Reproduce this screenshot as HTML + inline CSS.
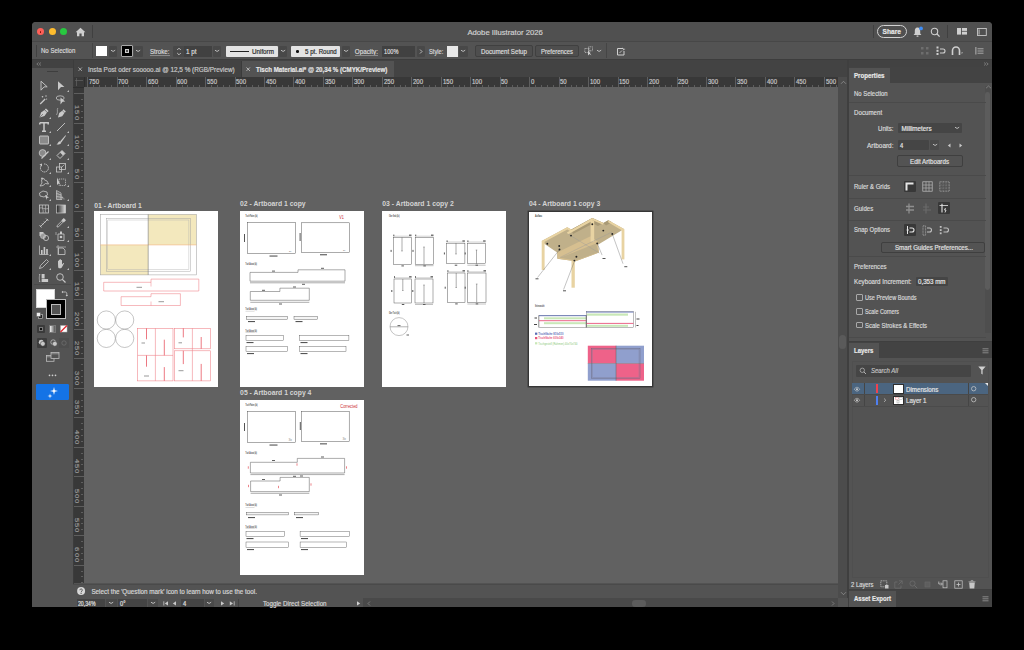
<!DOCTYPE html>
<html><head><meta charset="utf-8">
<style>
*{box-sizing:border-box;margin:0;padding:0}
html,body{width:1024px;height:650px;overflow:hidden;background:#000}
body{position:relative;font-family:"Liberation Sans",sans-serif;color:#d6d6d6;font-size:6.2px;line-height:1}
.a{position:absolute}
.t{position:absolute;white-space:nowrap;line-height:1;-webkit-text-stroke:0.18px currentColor}
.b{font-weight:bold}
svg{overflow:visible}
</style></head><body>

<div class="a" style="left:32.0px;top:21.6px;width:960.0px;height:585.4px;background:#535353;border-radius:4px 4px 0 0"></div>
<div class="a" style="left:32.0px;top:21.6px;width:960.0px;height:19.4px;background:#505050;border-radius:4px 4px 0 0"></div>
<div class="a" style="left:32.0px;top:41.0px;width:960.0px;height:19.4px;background:#535353;border-top:0.6px solid #474747;border-bottom:0.8px solid #3d3d3d"></div>
<div class="a" style="left:32.0px;top:60.0px;width:41.0px;height:8.0px;background:#424242"></div>
<div class="a" style="left:32.0px;top:68.0px;width:41.0px;height:539.0px;background:#535353"></div>
<div class="a" style="left:73.0px;top:60.0px;width:775.0px;height:16.5px;background:#434343"></div>
<div class="a" style="left:73.0px;top:76.5px;width:765.0px;height:10.2px;background:#383838"></div>
<div class="a" style="left:73.0px;top:76.5px;width:10.5px;height:506.5px;background:#383838"></div>
<div class="a" style="left:83.5px;top:86.7px;width:754.5px;height:496.8px;background:#616161"></div>
<div class="a" style="left:838.0px;top:76.5px;width:9.0px;height:521.0px;background:#4c4c4c"></div>
<div class="a" style="left:37.0px;top:28.3px;width:7.0px;height:7.0px;border-radius:50%;background:#fe5f57"></div>
<div class="a" style="left:39.6px;top:30.9px;width:1.8px;height:1.8px;border-radius:50%;background:#7e0c08"></div>
<div class="a" style="left:48.5px;top:28.3px;width:7.0px;height:7.0px;border-radius:50%;background:#febc2e"></div>
<div class="a" style="left:59.8px;top:28.3px;width:7.0px;height:7.0px;border-radius:50%;background:#28c840"></div>
<svg class="a" style="left:75.0px;top:27.0px" width="11" height="10" viewBox="0 0 11 10"><path d="M5.5 0.8 L10.4 5.2 L9 5.2 L9 9.2 L6.6 9.2 L6.6 6.6 L4.4 6.6 L4.4 9.2 L2 9.2 L2 5.2 L0.6 5.2 Z" fill="#cfcfcf"/></svg>
<div class="a" style="left:92.0px;top:25.0px;width:1.0px;height:13.0px;background:#404040"></div>
<div class="t" style="left:467.4px;top:28.55px;font-size:7.73px;color:#d0d0d0;">Adobe Illustrator 2026</div>
<div class="a" style="left:873.0px;top:25.0px;width:1.0px;height:13.0px;background:#404040"></div>
<div class="a" style="left:877.0px;top:24.8px;width:30.0px;height:13.4px;border:1px solid #d2d2d2;border-radius:7px"></div>
<div class="t" style="left:882.6px;top:29.36px;font-size:6.62px;color:#e8e8e8;font-weight:bold;">Share</div>
<svg class="a" style="left:912.0px;top:26.0px" width="12" height="12" viewBox="0 0 12 12"><path d="M5.5 1.5 C3.3 1.5 2.8 3.5 2.8 5 L2.8 7.5 L1.6 9 L9.4 9 L8.2 7.5 L8.2 5 C8.2 3.5 7.7 1.5 5.5 1.5 Z" fill="#cfcfcf"/><rect x="4.4" y="9.4" width="2.2" height="1.4" rx="0.7" fill="#cfcfcf"/><circle cx="9" cy="2.4" r="1.9" fill="#3e8ef7"/></svg>
<svg class="a" style="left:930.0px;top:26.5px" width="11" height="11" viewBox="0 0 11 11"><circle cx="4.5" cy="4.5" r="3.2" fill="none" stroke="#cfcfcf" stroke-width="1.1"/><path d="M6.8 6.8 L9.6 9.6" stroke="#cfcfcf" stroke-width="1.3"/></svg>
<div class="a" style="left:946.5px;top:25.0px;width:1.0px;height:13.0px;background:#404040"></div>
<svg class="a" style="left:956.8px;top:28.4px" width="10" height="7" viewBox="0 0 10 7"><rect x="0" y="0" width="4" height="6.6" fill="#cfcfcf"/><rect x="4.9" y="0" width="5.1" height="2.9" fill="#cfcfcf"/><rect x="4.9" y="3.7" width="5.1" height="2.9" fill="#cfcfcf"/></svg>
<svg class="a" style="left:977.0px;top:27.8px" width="10" height="8" viewBox="0 0 10 8"><rect x="0.5" y="0.5" width="8.8" height="7" fill="none" stroke="#c8c8c8" stroke-width="0.9"/><rect x="1.4" y="1.4" width="1.4" height="5.2" fill="#a0a0a0"/></svg>
<div class="a" style="left:35.5px;top:45.0px;width:1.0px;height:12.0px;background:#404040"></div>
<div class="t" style="left:40.7px;top:48.41px;font-size:6.30px;color:#d9d9d9;transform:scaleX(0.960);transform-origin:0 0;">No Selection</div>
<div class="a" style="left:92.0px;top:43.0px;width:1.0px;height:15.0px;background:#454545"></div>
<div class="a" style="left:96.2px;top:45.8px;width:11.3px;height:10.6px;background:#fff"></div>
<div class="a" style="left:108.6px;top:45.5px;width:8.2px;height:11.0px;background:#484848;border-radius:1px"></div>
<svg class="a" style="left:109.6px;top:49.0px" width="6.2" height="4" viewBox="0 0 6.2 4"><path d="M1 1.2 L3.10 2.46 L5.20 1.2" fill="none" stroke="#c8c8c8" stroke-width="0.9"/></svg>
<div class="a" style="left:121.1px;top:45.4px;width:11.7px;height:11.2px;background:#000;border:1.2px solid #a8a8a8;border-radius:1px"></div>
<div class="a" style="left:125.0px;top:49.0px;width:4.2px;height:4.2px;background:#d0d0d0"></div>
<div class="a" style="left:126.2px;top:50.2px;width:1.8px;height:1.8px;background:#555"></div>
<div class="a" style="left:133.6px;top:45.5px;width:9.4px;height:11.0px;background:#484848;border-radius:1px"></div>
<svg class="a" style="left:135.2px;top:49.0px" width="6.2" height="4" viewBox="0 0 6.2 4"><path d="M1 1.2 L3.10 2.46 L5.20 1.2" fill="none" stroke="#c8c8c8" stroke-width="0.9"/></svg>
<div class="t" style="left:150.0px;top:48.71px;font-size:6.30px;color:#d9d9d9;transform:scaleX(0.977);transform-origin:0 0;">Stroke:</div>
<div class="a" style="left:150.0px;top:55.4px;width:19.5px;height:0.7px;background:#8a8a8a"></div>
<div class="a" style="left:172.8px;top:45.5px;width:11.0px;height:11.0px;background:#484848;border-radius:1px 0 0 1px"></div>
<svg class="a" style="left:175.5px;top:46.5px" width="6" height="9" viewBox="0 0 6 9"><path d="M1.2 3 L3 1.2 L4.8 3 M1.2 6 L3 7.8 L4.8 6" fill="none" stroke="#c8c8c8" stroke-width="0.9"/></svg>
<div class="a" style="left:183.8px;top:45.5px;width:28.2px;height:11.0px;background:#414141"></div>
<div class="t" style="left:185.6px;top:48.71px;font-size:6.30px;color:#dedede;transform:scaleX(1.009);transform-origin:0 0;">1 pt</div>
<div class="a" style="left:213.4px;top:45.5px;width:7.6px;height:11.0px;background:#484848;border-radius:1px"></div>
<svg class="a" style="left:214.1px;top:49.0px" width="6.2" height="4" viewBox="0 0 6.2 4"><path d="M1 1.2 L3.10 2.46 L5.20 1.2" fill="none" stroke="#c8c8c8" stroke-width="0.9"/></svg>
<div class="a" style="left:226.0px;top:45.9px;width:51.6px;height:10.7px;background:#e3e3e3;border-radius:1px"></div>
<div class="a" style="left:229.5px;top:50.8px;width:19.0px;height:1.0px;background:#222"></div>
<div class="t" style="left:252.2px;top:48.71px;font-size:6.30px;color:#2a2a2a;transform:scaleX(0.993);transform-origin:0 0;">Uniform</div>
<div class="a" style="left:279.0px;top:45.5px;width:8.0px;height:11.0px;background:#484848;border-radius:1px"></div>
<svg class="a" style="left:279.9px;top:49.0px" width="6.2" height="4" viewBox="0 0 6.2 4"><path d="M1 1.2 L3.10 2.46 L5.20 1.2" fill="none" stroke="#c8c8c8" stroke-width="0.9"/></svg>
<div class="a" style="left:291.3px;top:45.9px;width:49.2px;height:10.7px;background:#e3e3e3;border-radius:1px"></div>
<div class="a" style="left:296.0px;top:50.0px;width:2.6px;height:2.6px;border-radius:50%;background:#111"></div>
<div class="t" style="left:305.4px;top:48.71px;font-size:6.30px;color:#2a2a2a;transform:scaleX(0.976);transform-origin:0 0;">5 pt. Round</div>
<div class="a" style="left:342.0px;top:45.5px;width:8.0px;height:11.0px;background:#484848;border-radius:1px"></div>
<svg class="a" style="left:342.9px;top:49.0px" width="6.2" height="4" viewBox="0 0 6.2 4"><path d="M1 1.2 L3.10 2.46 L5.20 1.2" fill="none" stroke="#c8c8c8" stroke-width="0.9"/></svg>
<div class="t" style="left:354.8px;top:48.71px;font-size:6.30px;color:#d9d9d9;">Opacity:</div>
<div class="a" style="left:354.8px;top:55.4px;width:23.0px;height:0.7px;background:#8a8a8a"></div>
<div class="a" style="left:381.7px;top:45.5px;width:33.6px;height:11.0px;background:#414141"></div>
<div class="t" style="left:383.7px;top:48.71px;font-size:6.30px;color:#dedede;transform:scaleX(0.894);transform-origin:0 0;">100%</div>
<div class="a" style="left:416.6px;top:45.5px;width:8.4px;height:11.0px;background:#484848;border-radius:1px"></div>
<svg class="a" style="left:419.0px;top:48.5px" width="4" height="5" viewBox="0 0 4 5"><path d="M1 0.5 L3 2.5 L1 4.5" fill="none" stroke="#c8c8c8" stroke-width="0.9"/></svg>
<div class="t" style="left:428.7px;top:48.71px;font-size:6.30px;color:#d9d9d9;transform:scaleX(0.908);transform-origin:0 0;">Style:</div>
<div class="a" style="left:446.9px;top:45.5px;width:11.1px;height:11.0px;background:#e8e8e8"></div>
<div class="a" style="left:459.0px;top:45.5px;width:9.0px;height:11.0px;background:#484848;border-radius:1px"></div>
<svg class="a" style="left:460.4px;top:49.0px" width="6.2" height="4" viewBox="0 0 6.2 4"><path d="M1 1.2 L3.10 2.46 L5.20 1.2" fill="none" stroke="#c8c8c8" stroke-width="0.9"/></svg>
<div class="a" style="left:475.0px;top:45.4px;width:57.8px;height:11.3px;border:1px solid #404040;border-radius:2px;background:#4e4e4e"></div>
<div class="t" style="left:481.0px;top:48.71px;font-size:6.30px;color:#dddddd;transform:scaleX(0.980);transform-origin:0 0;">Document Setup</div>
<div class="a" style="left:535.0px;top:45.4px;width:43.7px;height:11.3px;border:1px solid #404040;border-radius:2px;background:#4e4e4e"></div>
<div class="t" style="left:541.0px;top:48.71px;font-size:6.30px;color:#dddddd;transform:scaleX(0.942);transform-origin:0 0;">Preferences</div>
<svg class="a" style="left:584.0px;top:46.0px" width="10" height="10" viewBox="0 0 10 10"><rect x="0.8" y="2.5" width="5" height="4" fill="none" stroke="#bdbdbd" stroke-width="0.8" stroke-dasharray="1 0.6"/><rect x="4.5" y="0.8" width="4" height="4" fill="none" stroke="#bdbdbd" stroke-width="0.8" stroke-dasharray="1 0.6"/><path d="M4 4 L4 9.5 L5.5 8 L7.5 9.5 Z" fill="#cfcfcf"/></svg>
<svg class="a" style="left:595.9px;top:49.0px" width="6.2" height="4" viewBox="0 0 6.2 4"><path d="M1 1.2 L3.10 2.46 L5.20 1.2" fill="none" stroke="#c8c8c8" stroke-width="0.9"/></svg>
<div class="a" style="left:606.0px;top:43.0px;width:1.0px;height:15.0px;background:#454545"></div>
<svg class="a" style="left:615.5px;top:46.0px" width="10" height="10" viewBox="0 0 10 10"><path d="M7 2.5 L1.5 2.5 L1.5 9 L8 9 L8 5" fill="none" stroke="#cfcfcf" stroke-width="1"/><path d="M6 0.5 L7 2.5 L9.5 3 L7.5 4 L8 6" fill="#cfcfcf"/><path d="M3.5 7 L6 4.5" stroke="#cfcfcf" stroke-width="0.8"/></svg>
<svg class="a" style="left:921.0px;top:46.5px" width="8" height="8" viewBox="0 0 8 8"><g fill="#6e6e6e"><rect x="0" y="0" width="2.5" height="2.5"/><rect x="5" y="0" width="2.5" height="2.5"/><rect x="0" y="5" width="2.5" height="2.5"/><rect x="5" y="5" width="2.5" height="2.5"/></g></svg>
<svg class="a" style="left:935.5px;top:46.0px" width="10" height="10" viewBox="0 0 10 10"><g fill="#cfcfcf"><rect x="0.5" y="0.5" width="2" height="2"/><rect x="0.5" y="3.8" width="2" height="2"/><rect x="0.5" y="7" width="2" height="2"/></g><path d="M4 3 L7 3 A2 2 0 0 1 7 7 L4 7" fill="none" stroke="#cfcfcf" stroke-width="1.1"/></svg>
<svg class="a" style="left:951.0px;top:46.0px" width="13" height="10" viewBox="0 0 13 10"><path d="M1.5 9 L1.5 4.5 A3.5 3.5 0 0 1 8.5 4.5 L8.5 9" fill="none" stroke="#cfcfcf" stroke-width="1.6"/><path d="M9.8 6.3 L10.9 7.3 L12 6.3" fill="none" stroke="#bdbdbd" stroke-width="0.7"/></svg>
<svg class="a" style="left:974.5px;top:46.5px" width="9" height="8" viewBox="0 0 9 8"><g fill="#8f8f8f"><rect x="0" y="0" width="1.6" height="7.5"/><rect x="2.5" y="1" width="6" height="1.4"/><rect x="2.5" y="3.3" width="6" height="1.4"/><rect x="2.5" y="5.6" width="6" height="1.4"/></g></svg>
<div class="a" style="left:241.4px;top:60.5px;width:0.8px;height:16.0px;background:#3a3a3a"></div>
<div class="a" style="left:242.0px;top:60.5px;width:152.0px;height:16.0px;background:#535353"></div>
<svg class="a" style="left:78.3px;top:66.8px" width="4.4" height="4.4" viewBox="0 0 4.4 4.4"><path d="M0.5 0.5 L3.9 3.9 M3.9 0.5 L0.5 3.9" stroke="#bdbdbd" stroke-width="0.8"/></svg>
<div class="t" style="left:87.6px;top:66.51px;font-size:6.30px;color:#c9c9c9;transform:scaleX(1.014);transform-origin:0 0;">Insta Post oder sooooo.ai @ 12,5 % (RGB/Preview)</div>
<svg class="a" style="left:245.8px;top:66.8px" width="4.4" height="4.4" viewBox="0 0 4.4 4.4"><path d="M0.5 0.5 L3.9 3.9 M3.9 0.5 L0.5 3.9" stroke="#d0d0d0" stroke-width="0.8"/></svg>
<div class="t" style="left:255.7px;top:66.51px;font-size:6.30px;color:#e6e6e6;font-weight:bold;transform:scaleX(0.979);transform-origin:0 0;">Tisch Material.ai* @ 20,34 % (CMYK/Preview)</div>
<div class="a" style="left:87.1px;top:76.7px;width:0.7px;height:9.9px;background:#5e5e5e"></div>
<div class="t" style="left:88.9px;top:79.21px;font-size:6.30px;color:#c8c8c8;transform:scaleX(0.956);transform-origin:0 0;">750</div>
<div class="a" style="left:93.0px;top:84.6px;width:0.6px;height:2.0px;background:#5e5e5e"></div>
<div class="a" style="left:98.9px;top:84.6px;width:0.6px;height:2.0px;background:#5e5e5e"></div>
<div class="a" style="left:104.8px;top:84.6px;width:0.6px;height:2.0px;background:#5e5e5e"></div>
<div class="a" style="left:110.7px;top:84.6px;width:0.6px;height:2.0px;background:#5e5e5e"></div>
<div class="a" style="left:116.6px;top:76.7px;width:0.7px;height:9.9px;background:#5e5e5e"></div>
<div class="t" style="left:118.3px;top:79.21px;font-size:6.30px;color:#c8c8c8;transform:scaleX(0.956);transform-origin:0 0;">700</div>
<div class="a" style="left:122.5px;top:84.6px;width:0.6px;height:2.0px;background:#5e5e5e"></div>
<div class="a" style="left:128.4px;top:84.6px;width:0.6px;height:2.0px;background:#5e5e5e"></div>
<div class="a" style="left:134.3px;top:84.6px;width:0.6px;height:2.0px;background:#5e5e5e"></div>
<div class="a" style="left:140.2px;top:84.6px;width:0.6px;height:2.0px;background:#5e5e5e"></div>
<div class="a" style="left:146.0px;top:76.7px;width:0.7px;height:9.9px;background:#5e5e5e"></div>
<div class="t" style="left:147.8px;top:79.21px;font-size:6.30px;color:#c8c8c8;transform:scaleX(0.956);transform-origin:0 0;">650</div>
<div class="a" style="left:152.0px;top:84.6px;width:0.6px;height:2.0px;background:#5e5e5e"></div>
<div class="a" style="left:157.9px;top:84.6px;width:0.6px;height:2.0px;background:#5e5e5e"></div>
<div class="a" style="left:163.8px;top:84.6px;width:0.6px;height:2.0px;background:#5e5e5e"></div>
<div class="a" style="left:169.7px;top:84.6px;width:0.6px;height:2.0px;background:#5e5e5e"></div>
<div class="a" style="left:175.5px;top:76.7px;width:0.7px;height:9.9px;background:#5e5e5e"></div>
<div class="t" style="left:177.3px;top:79.21px;font-size:6.30px;color:#c8c8c8;transform:scaleX(0.956);transform-origin:0 0;">600</div>
<div class="a" style="left:181.5px;top:84.6px;width:0.6px;height:2.0px;background:#5e5e5e"></div>
<div class="a" style="left:187.3px;top:84.6px;width:0.6px;height:2.0px;background:#5e5e5e"></div>
<div class="a" style="left:193.2px;top:84.6px;width:0.6px;height:2.0px;background:#5e5e5e"></div>
<div class="a" style="left:199.1px;top:84.6px;width:0.6px;height:2.0px;background:#5e5e5e"></div>
<div class="a" style="left:205.0px;top:76.7px;width:0.7px;height:9.9px;background:#5e5e5e"></div>
<div class="t" style="left:206.7px;top:79.21px;font-size:6.30px;color:#c8c8c8;transform:scaleX(0.956);transform-origin:0 0;">550</div>
<div class="a" style="left:210.9px;top:84.6px;width:0.6px;height:2.0px;background:#5e5e5e"></div>
<div class="a" style="left:216.8px;top:84.6px;width:0.6px;height:2.0px;background:#5e5e5e"></div>
<div class="a" style="left:222.7px;top:84.6px;width:0.6px;height:2.0px;background:#5e5e5e"></div>
<div class="a" style="left:228.6px;top:84.6px;width:0.6px;height:2.0px;background:#5e5e5e"></div>
<div class="a" style="left:234.5px;top:76.7px;width:0.7px;height:9.9px;background:#5e5e5e"></div>
<div class="t" style="left:236.2px;top:79.21px;font-size:6.30px;color:#c8c8c8;transform:scaleX(0.956);transform-origin:0 0;">500</div>
<div class="a" style="left:240.4px;top:84.6px;width:0.6px;height:2.0px;background:#5e5e5e"></div>
<div class="a" style="left:246.3px;top:84.6px;width:0.6px;height:2.0px;background:#5e5e5e"></div>
<div class="a" style="left:252.2px;top:84.6px;width:0.6px;height:2.0px;background:#5e5e5e"></div>
<div class="a" style="left:258.1px;top:84.6px;width:0.6px;height:2.0px;background:#5e5e5e"></div>
<div class="a" style="left:263.9px;top:76.7px;width:0.7px;height:9.9px;background:#5e5e5e"></div>
<div class="t" style="left:265.7px;top:79.21px;font-size:6.30px;color:#c8c8c8;transform:scaleX(0.956);transform-origin:0 0;">450</div>
<div class="a" style="left:269.9px;top:84.6px;width:0.6px;height:2.0px;background:#5e5e5e"></div>
<div class="a" style="left:275.8px;top:84.6px;width:0.6px;height:2.0px;background:#5e5e5e"></div>
<div class="a" style="left:281.7px;top:84.6px;width:0.6px;height:2.0px;background:#5e5e5e"></div>
<div class="a" style="left:287.5px;top:84.6px;width:0.6px;height:2.0px;background:#5e5e5e"></div>
<div class="a" style="left:293.4px;top:76.7px;width:0.7px;height:9.9px;background:#5e5e5e"></div>
<div class="t" style="left:295.1px;top:79.21px;font-size:6.30px;color:#c8c8c8;transform:scaleX(0.956);transform-origin:0 0;">400</div>
<div class="a" style="left:299.3px;top:84.6px;width:0.6px;height:2.0px;background:#5e5e5e"></div>
<div class="a" style="left:305.2px;top:84.6px;width:0.6px;height:2.0px;background:#5e5e5e"></div>
<div class="a" style="left:311.1px;top:84.6px;width:0.6px;height:2.0px;background:#5e5e5e"></div>
<div class="a" style="left:317.0px;top:84.6px;width:0.6px;height:2.0px;background:#5e5e5e"></div>
<div class="a" style="left:322.9px;top:76.7px;width:0.7px;height:9.9px;background:#5e5e5e"></div>
<div class="t" style="left:324.6px;top:79.21px;font-size:6.30px;color:#c8c8c8;transform:scaleX(0.956);transform-origin:0 0;">350</div>
<div class="a" style="left:328.8px;top:84.6px;width:0.6px;height:2.0px;background:#5e5e5e"></div>
<div class="a" style="left:334.7px;top:84.6px;width:0.6px;height:2.0px;background:#5e5e5e"></div>
<div class="a" style="left:340.6px;top:84.6px;width:0.6px;height:2.0px;background:#5e5e5e"></div>
<div class="a" style="left:346.5px;top:84.6px;width:0.6px;height:2.0px;background:#5e5e5e"></div>
<div class="a" style="left:352.3px;top:76.7px;width:0.7px;height:9.9px;background:#5e5e5e"></div>
<div class="t" style="left:354.1px;top:79.21px;font-size:6.30px;color:#c8c8c8;transform:scaleX(0.956);transform-origin:0 0;">300</div>
<div class="a" style="left:358.3px;top:84.6px;width:0.6px;height:2.0px;background:#5e5e5e"></div>
<div class="a" style="left:364.2px;top:84.6px;width:0.6px;height:2.0px;background:#5e5e5e"></div>
<div class="a" style="left:370.1px;top:84.6px;width:0.6px;height:2.0px;background:#5e5e5e"></div>
<div class="a" style="left:376.0px;top:84.6px;width:0.6px;height:2.0px;background:#5e5e5e"></div>
<div class="a" style="left:381.8px;top:76.7px;width:0.7px;height:9.9px;background:#5e5e5e"></div>
<div class="t" style="left:383.5px;top:79.21px;font-size:6.30px;color:#c8c8c8;transform:scaleX(0.956);transform-origin:0 0;">250</div>
<div class="a" style="left:387.7px;top:84.6px;width:0.6px;height:2.0px;background:#5e5e5e"></div>
<div class="a" style="left:393.6px;top:84.6px;width:0.6px;height:2.0px;background:#5e5e5e"></div>
<div class="a" style="left:399.5px;top:84.6px;width:0.6px;height:2.0px;background:#5e5e5e"></div>
<div class="a" style="left:405.4px;top:84.6px;width:0.6px;height:2.0px;background:#5e5e5e"></div>
<div class="a" style="left:411.3px;top:76.7px;width:0.7px;height:9.9px;background:#5e5e5e"></div>
<div class="t" style="left:413.0px;top:79.21px;font-size:6.30px;color:#c8c8c8;transform:scaleX(0.956);transform-origin:0 0;">200</div>
<div class="a" style="left:417.2px;top:84.6px;width:0.6px;height:2.0px;background:#5e5e5e"></div>
<div class="a" style="left:423.1px;top:84.6px;width:0.6px;height:2.0px;background:#5e5e5e"></div>
<div class="a" style="left:429.0px;top:84.6px;width:0.6px;height:2.0px;background:#5e5e5e"></div>
<div class="a" style="left:434.9px;top:84.6px;width:0.6px;height:2.0px;background:#5e5e5e"></div>
<div class="a" style="left:440.7px;top:76.7px;width:0.7px;height:9.9px;background:#5e5e5e"></div>
<div class="t" style="left:442.5px;top:79.21px;font-size:6.30px;color:#c8c8c8;transform:scaleX(0.956);transform-origin:0 0;">150</div>
<div class="a" style="left:446.7px;top:84.6px;width:0.6px;height:2.0px;background:#5e5e5e"></div>
<div class="a" style="left:452.6px;top:84.6px;width:0.6px;height:2.0px;background:#5e5e5e"></div>
<div class="a" style="left:458.5px;top:84.6px;width:0.6px;height:2.0px;background:#5e5e5e"></div>
<div class="a" style="left:464.4px;top:84.6px;width:0.6px;height:2.0px;background:#5e5e5e"></div>
<div class="a" style="left:470.2px;top:76.7px;width:0.7px;height:9.9px;background:#5e5e5e"></div>
<div class="t" style="left:472.0px;top:79.21px;font-size:6.30px;color:#c8c8c8;transform:scaleX(0.956);transform-origin:0 0;">100</div>
<div class="a" style="left:476.2px;top:84.6px;width:0.6px;height:2.0px;background:#5e5e5e"></div>
<div class="a" style="left:482.0px;top:84.6px;width:0.6px;height:2.0px;background:#5e5e5e"></div>
<div class="a" style="left:487.9px;top:84.6px;width:0.6px;height:2.0px;background:#5e5e5e"></div>
<div class="a" style="left:493.8px;top:84.6px;width:0.6px;height:2.0px;background:#5e5e5e"></div>
<div class="a" style="left:499.7px;top:76.7px;width:0.7px;height:9.9px;background:#5e5e5e"></div>
<div class="t" style="left:501.4px;top:79.21px;font-size:6.30px;color:#c8c8c8;transform:scaleX(0.956);transform-origin:0 0;">50</div>
<div class="a" style="left:505.6px;top:84.6px;width:0.6px;height:2.0px;background:#5e5e5e"></div>
<div class="a" style="left:511.5px;top:84.6px;width:0.6px;height:2.0px;background:#5e5e5e"></div>
<div class="a" style="left:517.4px;top:84.6px;width:0.6px;height:2.0px;background:#5e5e5e"></div>
<div class="a" style="left:523.3px;top:84.6px;width:0.6px;height:2.0px;background:#5e5e5e"></div>
<div class="a" style="left:529.1px;top:76.7px;width:0.7px;height:9.9px;background:#5e5e5e"></div>
<div class="t" style="left:530.9px;top:79.21px;font-size:6.30px;color:#c8c8c8;transform:scaleX(0.956);transform-origin:0 0;">0</div>
<div class="a" style="left:535.1px;top:84.6px;width:0.6px;height:2.0px;background:#5e5e5e"></div>
<div class="a" style="left:541.0px;top:84.6px;width:0.6px;height:2.0px;background:#5e5e5e"></div>
<div class="a" style="left:546.9px;top:84.6px;width:0.6px;height:2.0px;background:#5e5e5e"></div>
<div class="a" style="left:552.8px;top:84.6px;width:0.6px;height:2.0px;background:#5e5e5e"></div>
<div class="a" style="left:558.6px;top:76.7px;width:0.7px;height:9.9px;background:#5e5e5e"></div>
<div class="t" style="left:560.4px;top:79.21px;font-size:6.30px;color:#c8c8c8;transform:scaleX(0.956);transform-origin:0 0;">50</div>
<div class="a" style="left:564.6px;top:84.6px;width:0.6px;height:2.0px;background:#5e5e5e"></div>
<div class="a" style="left:570.5px;top:84.6px;width:0.6px;height:2.0px;background:#5e5e5e"></div>
<div class="a" style="left:576.4px;top:84.6px;width:0.6px;height:2.0px;background:#5e5e5e"></div>
<div class="a" style="left:582.2px;top:84.6px;width:0.6px;height:2.0px;background:#5e5e5e"></div>
<div class="a" style="left:588.1px;top:76.7px;width:0.7px;height:9.9px;background:#5e5e5e"></div>
<div class="t" style="left:589.8px;top:79.21px;font-size:6.30px;color:#c8c8c8;transform:scaleX(0.956);transform-origin:0 0;">100</div>
<div class="a" style="left:594.0px;top:84.6px;width:0.6px;height:2.0px;background:#5e5e5e"></div>
<div class="a" style="left:599.9px;top:84.6px;width:0.6px;height:2.0px;background:#5e5e5e"></div>
<div class="a" style="left:605.8px;top:84.6px;width:0.6px;height:2.0px;background:#5e5e5e"></div>
<div class="a" style="left:611.7px;top:84.6px;width:0.6px;height:2.0px;background:#5e5e5e"></div>
<div class="a" style="left:617.6px;top:76.7px;width:0.7px;height:9.9px;background:#5e5e5e"></div>
<div class="t" style="left:619.3px;top:79.21px;font-size:6.30px;color:#c8c8c8;transform:scaleX(0.956);transform-origin:0 0;">150</div>
<div class="a" style="left:623.5px;top:84.6px;width:0.6px;height:2.0px;background:#5e5e5e"></div>
<div class="a" style="left:629.4px;top:84.6px;width:0.6px;height:2.0px;background:#5e5e5e"></div>
<div class="a" style="left:635.3px;top:84.6px;width:0.6px;height:2.0px;background:#5e5e5e"></div>
<div class="a" style="left:641.2px;top:84.6px;width:0.6px;height:2.0px;background:#5e5e5e"></div>
<div class="a" style="left:647.0px;top:76.7px;width:0.7px;height:9.9px;background:#5e5e5e"></div>
<div class="t" style="left:648.8px;top:79.21px;font-size:6.30px;color:#c8c8c8;transform:scaleX(0.956);transform-origin:0 0;">200</div>
<div class="a" style="left:653.0px;top:84.6px;width:0.6px;height:2.0px;background:#5e5e5e"></div>
<div class="a" style="left:658.9px;top:84.6px;width:0.6px;height:2.0px;background:#5e5e5e"></div>
<div class="a" style="left:664.8px;top:84.6px;width:0.6px;height:2.0px;background:#5e5e5e"></div>
<div class="a" style="left:670.7px;top:84.6px;width:0.6px;height:2.0px;background:#5e5e5e"></div>
<div class="a" style="left:676.5px;top:76.7px;width:0.7px;height:9.9px;background:#5e5e5e"></div>
<div class="t" style="left:678.2px;top:79.21px;font-size:6.30px;color:#c8c8c8;transform:scaleX(0.956);transform-origin:0 0;">250</div>
<div class="a" style="left:682.4px;top:84.6px;width:0.6px;height:2.0px;background:#5e5e5e"></div>
<div class="a" style="left:688.3px;top:84.6px;width:0.6px;height:2.0px;background:#5e5e5e"></div>
<div class="a" style="left:694.2px;top:84.6px;width:0.6px;height:2.0px;background:#5e5e5e"></div>
<div class="a" style="left:700.1px;top:84.6px;width:0.6px;height:2.0px;background:#5e5e5e"></div>
<div class="a" style="left:706.0px;top:76.7px;width:0.7px;height:9.9px;background:#5e5e5e"></div>
<div class="t" style="left:707.7px;top:79.21px;font-size:6.30px;color:#c8c8c8;transform:scaleX(0.956);transform-origin:0 0;">300</div>
<div class="a" style="left:711.9px;top:84.6px;width:0.6px;height:2.0px;background:#5e5e5e"></div>
<div class="a" style="left:717.8px;top:84.6px;width:0.6px;height:2.0px;background:#5e5e5e"></div>
<div class="a" style="left:723.7px;top:84.6px;width:0.6px;height:2.0px;background:#5e5e5e"></div>
<div class="a" style="left:729.6px;top:84.6px;width:0.6px;height:2.0px;background:#5e5e5e"></div>
<div class="a" style="left:735.4px;top:76.7px;width:0.7px;height:9.9px;background:#5e5e5e"></div>
<div class="t" style="left:737.2px;top:79.21px;font-size:6.30px;color:#c8c8c8;transform:scaleX(0.956);transform-origin:0 0;">350</div>
<div class="a" style="left:741.4px;top:84.6px;width:0.6px;height:2.0px;background:#5e5e5e"></div>
<div class="a" style="left:747.3px;top:84.6px;width:0.6px;height:2.0px;background:#5e5e5e"></div>
<div class="a" style="left:753.2px;top:84.6px;width:0.6px;height:2.0px;background:#5e5e5e"></div>
<div class="a" style="left:759.1px;top:84.6px;width:0.6px;height:2.0px;background:#5e5e5e"></div>
<div class="a" style="left:764.9px;top:76.7px;width:0.7px;height:9.9px;background:#5e5e5e"></div>
<div class="t" style="left:766.7px;top:79.21px;font-size:6.30px;color:#c8c8c8;transform:scaleX(0.956);transform-origin:0 0;">400</div>
<div class="a" style="left:770.9px;top:84.6px;width:0.6px;height:2.0px;background:#5e5e5e"></div>
<div class="a" style="left:776.7px;top:84.6px;width:0.6px;height:2.0px;background:#5e5e5e"></div>
<div class="a" style="left:782.6px;top:84.6px;width:0.6px;height:2.0px;background:#5e5e5e"></div>
<div class="a" style="left:788.5px;top:84.6px;width:0.6px;height:2.0px;background:#5e5e5e"></div>
<div class="a" style="left:794.4px;top:76.7px;width:0.7px;height:9.9px;background:#5e5e5e"></div>
<div class="t" style="left:796.1px;top:79.21px;font-size:6.30px;color:#c8c8c8;transform:scaleX(0.956);transform-origin:0 0;">450</div>
<div class="a" style="left:800.3px;top:84.6px;width:0.6px;height:2.0px;background:#5e5e5e"></div>
<div class="a" style="left:806.2px;top:84.6px;width:0.6px;height:2.0px;background:#5e5e5e"></div>
<div class="a" style="left:812.1px;top:84.6px;width:0.6px;height:2.0px;background:#5e5e5e"></div>
<div class="a" style="left:818.0px;top:84.6px;width:0.6px;height:2.0px;background:#5e5e5e"></div>
<div class="a" style="left:823.9px;top:76.7px;width:0.7px;height:9.9px;background:#5e5e5e"></div>
<div class="t" style="left:825.6px;top:79.21px;font-size:6.30px;color:#c8c8c8;transform:scaleX(0.956);transform-origin:0 0;">500</div>
<div class="a" style="left:829.8px;top:84.6px;width:0.6px;height:2.0px;background:#5e5e5e"></div>
<div class="a" style="left:835.7px;top:84.6px;width:0.6px;height:2.0px;background:#5e5e5e"></div>
<div class="a" style="left:83.5px;top:76.7px;width:0.6px;height:10.0px;background:#2e2e2e"></div>
<div class="a" style="left:74.5px;top:80.3px;width:8.0px;height:0.5px;background:#6a6a6a;opacity:0.6"></div>
<div class="a" style="left:76.1px;top:77.5px;width:0.5px;height:8.5px;background:#6a6a6a;opacity:0.6"></div>
<div class="a" style="left:73.0px;top:60.0px;width:0.8px;height:527.0px;background:#3c3c3c"></div>
<div class="a" style="left:81.3px;top:87.2px;width:2.0px;height:0.6px;background:#5e5e5e"></div>
<div class="a" style="left:73.5px;top:93.1px;width:10.0px;height:0.7px;background:#5e5e5e"></div>
<div class="a" style="left:81.3px;top:99.0px;width:2.0px;height:0.6px;background:#5e5e5e"></div>
<div class="a" style="left:81.3px;top:104.9px;width:2.0px;height:0.6px;background:#5e5e5e"></div>
<div class="a" style="left:81.3px;top:110.8px;width:2.0px;height:0.6px;background:#5e5e5e"></div>
<div class="a" style="left:81.3px;top:116.7px;width:2.0px;height:0.6px;background:#5e5e5e"></div>
<div class="a" style="left:73.5px;top:122.5px;width:10.0px;height:0.7px;background:#5e5e5e"></div>
<div class="t" style="left:75.2px;top:104.39px;width:4px;height:6px;font-size:6px;line-height:6px;text-align:center;color:#9c9c9c;transform:rotate(90deg) scale(1.25,0.8)">1</div>
<div class="t" style="left:75.2px;top:109.49px;width:4px;height:6px;font-size:6px;line-height:6px;text-align:center;color:#9c9c9c;transform:rotate(90deg) scale(1.25,0.8)">5</div>
<div class="t" style="left:75.2px;top:114.59px;width:4px;height:6px;font-size:6px;line-height:6px;text-align:center;color:#9c9c9c;transform:rotate(90deg) scale(1.25,0.8)">0</div>
<div class="a" style="left:81.3px;top:128.5px;width:2.0px;height:0.6px;background:#5e5e5e"></div>
<div class="a" style="left:81.3px;top:134.4px;width:2.0px;height:0.6px;background:#5e5e5e"></div>
<div class="a" style="left:81.3px;top:140.3px;width:2.0px;height:0.6px;background:#5e5e5e"></div>
<div class="a" style="left:81.3px;top:146.2px;width:2.0px;height:0.6px;background:#5e5e5e"></div>
<div class="a" style="left:73.5px;top:152.0px;width:10.0px;height:0.7px;background:#5e5e5e"></div>
<div class="t" style="left:75.2px;top:133.86px;width:4px;height:6px;font-size:6px;line-height:6px;text-align:center;color:#9c9c9c;transform:rotate(90deg) scale(1.25,0.8)">1</div>
<div class="t" style="left:75.2px;top:138.96px;width:4px;height:6px;font-size:6px;line-height:6px;text-align:center;color:#9c9c9c;transform:rotate(90deg) scale(1.25,0.8)">0</div>
<div class="t" style="left:75.2px;top:144.06px;width:4px;height:6px;font-size:6px;line-height:6px;text-align:center;color:#9c9c9c;transform:rotate(90deg) scale(1.25,0.8)">0</div>
<div class="a" style="left:81.3px;top:158.0px;width:2.0px;height:0.6px;background:#5e5e5e"></div>
<div class="a" style="left:81.3px;top:163.8px;width:2.0px;height:0.6px;background:#5e5e5e"></div>
<div class="a" style="left:81.3px;top:169.7px;width:2.0px;height:0.6px;background:#5e5e5e"></div>
<div class="a" style="left:81.3px;top:175.6px;width:2.0px;height:0.6px;background:#5e5e5e"></div>
<div class="a" style="left:73.5px;top:181.5px;width:10.0px;height:0.7px;background:#5e5e5e"></div>
<div class="t" style="left:75.2px;top:168.43px;width:4px;height:6px;font-size:6px;line-height:6px;text-align:center;color:#9c9c9c;transform:rotate(90deg) scale(1.25,0.8)">5</div>
<div class="t" style="left:75.2px;top:173.53px;width:4px;height:6px;font-size:6px;line-height:6px;text-align:center;color:#9c9c9c;transform:rotate(90deg) scale(1.25,0.8)">0</div>
<div class="a" style="left:81.3px;top:187.4px;width:2.0px;height:0.6px;background:#5e5e5e"></div>
<div class="a" style="left:81.3px;top:193.3px;width:2.0px;height:0.6px;background:#5e5e5e"></div>
<div class="a" style="left:81.3px;top:199.2px;width:2.0px;height:0.6px;background:#5e5e5e"></div>
<div class="a" style="left:81.3px;top:205.1px;width:2.0px;height:0.6px;background:#5e5e5e"></div>
<div class="a" style="left:73.5px;top:211.0px;width:10.0px;height:0.7px;background:#5e5e5e"></div>
<div class="t" style="left:75.2px;top:203.00px;width:4px;height:6px;font-size:6px;line-height:6px;text-align:center;color:#9c9c9c;transform:rotate(90deg) scale(1.25,0.8)">0</div>
<div class="a" style="left:81.3px;top:216.9px;width:2.0px;height:0.6px;background:#5e5e5e"></div>
<div class="a" style="left:81.3px;top:222.8px;width:2.0px;height:0.6px;background:#5e5e5e"></div>
<div class="a" style="left:81.3px;top:228.7px;width:2.0px;height:0.6px;background:#5e5e5e"></div>
<div class="a" style="left:81.3px;top:234.6px;width:2.0px;height:0.6px;background:#5e5e5e"></div>
<div class="a" style="left:73.5px;top:240.4px;width:10.0px;height:0.7px;background:#5e5e5e"></div>
<div class="t" style="left:75.2px;top:227.37px;width:4px;height:6px;font-size:6px;line-height:6px;text-align:center;color:#9c9c9c;transform:rotate(90deg) scale(1.25,0.8)">5</div>
<div class="t" style="left:75.2px;top:232.47px;width:4px;height:6px;font-size:6px;line-height:6px;text-align:center;color:#9c9c9c;transform:rotate(90deg) scale(1.25,0.8)">0</div>
<div class="a" style="left:81.3px;top:246.4px;width:2.0px;height:0.6px;background:#5e5e5e"></div>
<div class="a" style="left:81.3px;top:252.3px;width:2.0px;height:0.6px;background:#5e5e5e"></div>
<div class="a" style="left:81.3px;top:258.2px;width:2.0px;height:0.6px;background:#5e5e5e"></div>
<div class="a" style="left:81.3px;top:264.0px;width:2.0px;height:0.6px;background:#5e5e5e"></div>
<div class="a" style="left:73.5px;top:269.9px;width:10.0px;height:0.7px;background:#5e5e5e"></div>
<div class="t" style="left:75.2px;top:251.74px;width:4px;height:6px;font-size:6px;line-height:6px;text-align:center;color:#9c9c9c;transform:rotate(90deg) scale(1.25,0.8)">1</div>
<div class="t" style="left:75.2px;top:256.84px;width:4px;height:6px;font-size:6px;line-height:6px;text-align:center;color:#9c9c9c;transform:rotate(90deg) scale(1.25,0.8)">0</div>
<div class="t" style="left:75.2px;top:261.94px;width:4px;height:6px;font-size:6px;line-height:6px;text-align:center;color:#9c9c9c;transform:rotate(90deg) scale(1.25,0.8)">0</div>
<div class="a" style="left:81.3px;top:275.8px;width:2.0px;height:0.6px;background:#5e5e5e"></div>
<div class="a" style="left:81.3px;top:281.7px;width:2.0px;height:0.6px;background:#5e5e5e"></div>
<div class="a" style="left:81.3px;top:287.6px;width:2.0px;height:0.6px;background:#5e5e5e"></div>
<div class="a" style="left:81.3px;top:293.5px;width:2.0px;height:0.6px;background:#5e5e5e"></div>
<div class="a" style="left:73.5px;top:299.4px;width:10.0px;height:0.7px;background:#5e5e5e"></div>
<div class="t" style="left:75.2px;top:281.21px;width:4px;height:6px;font-size:6px;line-height:6px;text-align:center;color:#9c9c9c;transform:rotate(90deg) scale(1.25,0.8)">1</div>
<div class="t" style="left:75.2px;top:286.31px;width:4px;height:6px;font-size:6px;line-height:6px;text-align:center;color:#9c9c9c;transform:rotate(90deg) scale(1.25,0.8)">5</div>
<div class="t" style="left:75.2px;top:291.41px;width:4px;height:6px;font-size:6px;line-height:6px;text-align:center;color:#9c9c9c;transform:rotate(90deg) scale(1.25,0.8)">0</div>
<div class="a" style="left:81.3px;top:305.3px;width:2.0px;height:0.6px;background:#5e5e5e"></div>
<div class="a" style="left:81.3px;top:311.2px;width:2.0px;height:0.6px;background:#5e5e5e"></div>
<div class="a" style="left:81.3px;top:317.1px;width:2.0px;height:0.6px;background:#5e5e5e"></div>
<div class="a" style="left:81.3px;top:323.0px;width:2.0px;height:0.6px;background:#5e5e5e"></div>
<div class="a" style="left:73.5px;top:328.8px;width:10.0px;height:0.7px;background:#5e5e5e"></div>
<div class="t" style="left:75.2px;top:310.68px;width:4px;height:6px;font-size:6px;line-height:6px;text-align:center;color:#9c9c9c;transform:rotate(90deg) scale(1.25,0.8)">2</div>
<div class="t" style="left:75.2px;top:315.78px;width:4px;height:6px;font-size:6px;line-height:6px;text-align:center;color:#9c9c9c;transform:rotate(90deg) scale(1.25,0.8)">0</div>
<div class="t" style="left:75.2px;top:320.88px;width:4px;height:6px;font-size:6px;line-height:6px;text-align:center;color:#9c9c9c;transform:rotate(90deg) scale(1.25,0.8)">0</div>
<div class="a" style="left:81.3px;top:334.8px;width:2.0px;height:0.6px;background:#5e5e5e"></div>
<div class="a" style="left:81.3px;top:340.7px;width:2.0px;height:0.6px;background:#5e5e5e"></div>
<div class="a" style="left:81.3px;top:346.6px;width:2.0px;height:0.6px;background:#5e5e5e"></div>
<div class="a" style="left:81.3px;top:352.5px;width:2.0px;height:0.6px;background:#5e5e5e"></div>
<div class="a" style="left:73.5px;top:358.3px;width:10.0px;height:0.7px;background:#5e5e5e"></div>
<div class="t" style="left:75.2px;top:340.15px;width:4px;height:6px;font-size:6px;line-height:6px;text-align:center;color:#9c9c9c;transform:rotate(90deg) scale(1.25,0.8)">2</div>
<div class="t" style="left:75.2px;top:345.25px;width:4px;height:6px;font-size:6px;line-height:6px;text-align:center;color:#9c9c9c;transform:rotate(90deg) scale(1.25,0.8)">5</div>
<div class="t" style="left:75.2px;top:350.35px;width:4px;height:6px;font-size:6px;line-height:6px;text-align:center;color:#9c9c9c;transform:rotate(90deg) scale(1.25,0.8)">0</div>
<div class="a" style="left:81.3px;top:364.2px;width:2.0px;height:0.6px;background:#5e5e5e"></div>
<div class="a" style="left:81.3px;top:370.1px;width:2.0px;height:0.6px;background:#5e5e5e"></div>
<div class="a" style="left:81.3px;top:376.0px;width:2.0px;height:0.6px;background:#5e5e5e"></div>
<div class="a" style="left:81.3px;top:381.9px;width:2.0px;height:0.6px;background:#5e5e5e"></div>
<div class="a" style="left:73.5px;top:387.8px;width:10.0px;height:0.7px;background:#5e5e5e"></div>
<div class="t" style="left:75.2px;top:369.62px;width:4px;height:6px;font-size:6px;line-height:6px;text-align:center;color:#9c9c9c;transform:rotate(90deg) scale(1.25,0.8)">3</div>
<div class="t" style="left:75.2px;top:374.72px;width:4px;height:6px;font-size:6px;line-height:6px;text-align:center;color:#9c9c9c;transform:rotate(90deg) scale(1.25,0.8)">0</div>
<div class="t" style="left:75.2px;top:379.82px;width:4px;height:6px;font-size:6px;line-height:6px;text-align:center;color:#9c9c9c;transform:rotate(90deg) scale(1.25,0.8)">0</div>
<div class="a" style="left:81.3px;top:393.7px;width:2.0px;height:0.6px;background:#5e5e5e"></div>
<div class="a" style="left:81.3px;top:399.6px;width:2.0px;height:0.6px;background:#5e5e5e"></div>
<div class="a" style="left:81.3px;top:405.5px;width:2.0px;height:0.6px;background:#5e5e5e"></div>
<div class="a" style="left:81.3px;top:411.4px;width:2.0px;height:0.6px;background:#5e5e5e"></div>
<div class="a" style="left:73.5px;top:417.2px;width:10.0px;height:0.7px;background:#5e5e5e"></div>
<div class="t" style="left:75.2px;top:399.09px;width:4px;height:6px;font-size:6px;line-height:6px;text-align:center;color:#9c9c9c;transform:rotate(90deg) scale(1.25,0.8)">3</div>
<div class="t" style="left:75.2px;top:404.19px;width:4px;height:6px;font-size:6px;line-height:6px;text-align:center;color:#9c9c9c;transform:rotate(90deg) scale(1.25,0.8)">5</div>
<div class="t" style="left:75.2px;top:409.29px;width:4px;height:6px;font-size:6px;line-height:6px;text-align:center;color:#9c9c9c;transform:rotate(90deg) scale(1.25,0.8)">0</div>
<div class="a" style="left:81.3px;top:423.2px;width:2.0px;height:0.6px;background:#5e5e5e"></div>
<div class="a" style="left:81.3px;top:429.1px;width:2.0px;height:0.6px;background:#5e5e5e"></div>
<div class="a" style="left:81.3px;top:435.0px;width:2.0px;height:0.6px;background:#5e5e5e"></div>
<div class="a" style="left:81.3px;top:440.9px;width:2.0px;height:0.6px;background:#5e5e5e"></div>
<div class="a" style="left:73.5px;top:446.7px;width:10.0px;height:0.7px;background:#5e5e5e"></div>
<div class="t" style="left:75.2px;top:428.56px;width:4px;height:6px;font-size:6px;line-height:6px;text-align:center;color:#9c9c9c;transform:rotate(90deg) scale(1.25,0.8)">4</div>
<div class="t" style="left:75.2px;top:433.66px;width:4px;height:6px;font-size:6px;line-height:6px;text-align:center;color:#9c9c9c;transform:rotate(90deg) scale(1.25,0.8)">0</div>
<div class="t" style="left:75.2px;top:438.76px;width:4px;height:6px;font-size:6px;line-height:6px;text-align:center;color:#9c9c9c;transform:rotate(90deg) scale(1.25,0.8)">0</div>
<div class="a" style="left:81.3px;top:452.7px;width:2.0px;height:0.6px;background:#5e5e5e"></div>
<div class="a" style="left:81.3px;top:458.5px;width:2.0px;height:0.6px;background:#5e5e5e"></div>
<div class="a" style="left:81.3px;top:464.4px;width:2.0px;height:0.6px;background:#5e5e5e"></div>
<div class="a" style="left:81.3px;top:470.3px;width:2.0px;height:0.6px;background:#5e5e5e"></div>
<div class="a" style="left:73.5px;top:476.2px;width:10.0px;height:0.7px;background:#5e5e5e"></div>
<div class="t" style="left:75.2px;top:458.03px;width:4px;height:6px;font-size:6px;line-height:6px;text-align:center;color:#9c9c9c;transform:rotate(90deg) scale(1.25,0.8)">4</div>
<div class="t" style="left:75.2px;top:463.13px;width:4px;height:6px;font-size:6px;line-height:6px;text-align:center;color:#9c9c9c;transform:rotate(90deg) scale(1.25,0.8)">5</div>
<div class="t" style="left:75.2px;top:468.23px;width:4px;height:6px;font-size:6px;line-height:6px;text-align:center;color:#9c9c9c;transform:rotate(90deg) scale(1.25,0.8)">0</div>
<div class="a" style="left:81.3px;top:482.1px;width:2.0px;height:0.6px;background:#5e5e5e"></div>
<div class="a" style="left:81.3px;top:488.0px;width:2.0px;height:0.6px;background:#5e5e5e"></div>
<div class="a" style="left:81.3px;top:493.9px;width:2.0px;height:0.6px;background:#5e5e5e"></div>
<div class="a" style="left:81.3px;top:499.8px;width:2.0px;height:0.6px;background:#5e5e5e"></div>
<div class="a" style="left:73.5px;top:505.6px;width:10.0px;height:0.7px;background:#5e5e5e"></div>
<div class="t" style="left:75.2px;top:487.50px;width:4px;height:6px;font-size:6px;line-height:6px;text-align:center;color:#9c9c9c;transform:rotate(90deg) scale(1.25,0.8)">5</div>
<div class="t" style="left:75.2px;top:492.60px;width:4px;height:6px;font-size:6px;line-height:6px;text-align:center;color:#9c9c9c;transform:rotate(90deg) scale(1.25,0.8)">0</div>
<div class="t" style="left:75.2px;top:497.70px;width:4px;height:6px;font-size:6px;line-height:6px;text-align:center;color:#9c9c9c;transform:rotate(90deg) scale(1.25,0.8)">0</div>
<div class="a" style="left:81.3px;top:511.6px;width:2.0px;height:0.6px;background:#5e5e5e"></div>
<div class="a" style="left:81.3px;top:517.5px;width:2.0px;height:0.6px;background:#5e5e5e"></div>
<div class="a" style="left:81.3px;top:523.4px;width:2.0px;height:0.6px;background:#5e5e5e"></div>
<div class="a" style="left:81.3px;top:529.3px;width:2.0px;height:0.6px;background:#5e5e5e"></div>
<div class="a" style="left:73.5px;top:535.1px;width:10.0px;height:0.7px;background:#5e5e5e"></div>
<div class="t" style="left:75.2px;top:516.97px;width:4px;height:6px;font-size:6px;line-height:6px;text-align:center;color:#9c9c9c;transform:rotate(90deg) scale(1.25,0.8)">5</div>
<div class="t" style="left:75.2px;top:522.07px;width:4px;height:6px;font-size:6px;line-height:6px;text-align:center;color:#9c9c9c;transform:rotate(90deg) scale(1.25,0.8)">5</div>
<div class="t" style="left:75.2px;top:527.17px;width:4px;height:6px;font-size:6px;line-height:6px;text-align:center;color:#9c9c9c;transform:rotate(90deg) scale(1.25,0.8)">0</div>
<div class="a" style="left:81.3px;top:541.1px;width:2.0px;height:0.6px;background:#5e5e5e"></div>
<div class="a" style="left:81.3px;top:547.0px;width:2.0px;height:0.6px;background:#5e5e5e"></div>
<div class="a" style="left:81.3px;top:552.9px;width:2.0px;height:0.6px;background:#5e5e5e"></div>
<div class="a" style="left:81.3px;top:558.7px;width:2.0px;height:0.6px;background:#5e5e5e"></div>
<div class="a" style="left:73.5px;top:564.6px;width:10.0px;height:0.7px;background:#5e5e5e"></div>
<div class="t" style="left:75.2px;top:546.44px;width:4px;height:6px;font-size:6px;line-height:6px;text-align:center;color:#9c9c9c;transform:rotate(90deg) scale(1.25,0.8)">6</div>
<div class="t" style="left:75.2px;top:551.54px;width:4px;height:6px;font-size:6px;line-height:6px;text-align:center;color:#9c9c9c;transform:rotate(90deg) scale(1.25,0.8)">0</div>
<div class="t" style="left:75.2px;top:556.64px;width:4px;height:6px;font-size:6px;line-height:6px;text-align:center;color:#9c9c9c;transform:rotate(90deg) scale(1.25,0.8)">0</div>
<div class="a" style="left:81.3px;top:570.5px;width:2.0px;height:0.6px;background:#5e5e5e"></div>
<div class="a" style="left:81.3px;top:576.4px;width:2.0px;height:0.6px;background:#5e5e5e"></div>
<div class="a" style="left:81.3px;top:582.3px;width:2.0px;height:0.6px;background:#5e5e5e"></div>
<div class="a" style="left:73.0px;top:86.5px;width:10.5px;height:0.6px;background:#2e2e2e"></div>
<div class="a" style="left:94.2px;top:211.4px;width:124.1px;height:175.4px;background:#fff;"></div>
<div class="t" style="left:94.2px;top:203.08px;font-size:6.81px;color:#d4d4d4;font-weight:bold;-webkit-text-stroke:0">01 - Artboard 1</div>
<div class="a" style="left:240.1px;top:211.0px;width:123.7px;height:175.8px;background:#fff;"></div>
<div class="t" style="left:240.1px;top:200.58px;font-size:6.80px;color:#d4d4d4;font-weight:bold;-webkit-text-stroke:0">02 - Artboard 1 copy</div>
<div class="a" style="left:382.1px;top:210.9px;width:124.0px;height:175.7px;background:#fff;"></div>
<div class="t" style="left:382.3px;top:200.56px;font-size:6.84px;color:#d4d4d4;font-weight:bold;-webkit-text-stroke:0">03 - Artboard 1 copy 2</div>
<div class="a" style="left:529.2px;top:211.6px;width:122.9px;height:174.4px;background:#fff;box-shadow:0 0 0 1.4px #363636"></div>
<div class="t" style="left:528.9px;top:200.57px;font-size:6.82px;color:#d4d4d4;font-weight:bold;-webkit-text-stroke:0">04 - Artboard 1 copy 3</div>
<div class="a" style="left:240.1px;top:400.0px;width:123.5px;height:175.3px;background:#fff;"></div>
<div class="t" style="left:240.1px;top:390.07px;font-size:6.82px;color:#d4d4d4;font-weight:bold;-webkit-text-stroke:0">05 - Artboard 1 copy 4</div>
<svg class="a" style="left:0;top:0" width="1024" height="650" viewBox="0 0 1024 650"><rect x="148.20" y="214.40" width="48.20" height="30.50" fill="#f3e8bd" stroke="none" stroke-width="0.5" /><rect x="100.40" y="244.90" width="47.80" height="30.00" fill="#f3e8bd" stroke="none" stroke-width="0.5" /><rect x="100.40" y="214.40" width="96.00" height="60.50" fill="none" stroke="#9a9a9a" stroke-width="0.5" /><rect x="106.30" y="218.50" width="84.10" height="52.70" fill="none" stroke="#a0a0a0" stroke-width="0.45" /><rect x="107.80" y="220.00" width="81.10" height="49.70" fill="none" stroke="#b0b0b0" stroke-width="0.4" /><line x1="100.40" y1="244.90" x2="196.40" y2="244.90" stroke="#f0b27e" stroke-width="0.6"/><line x1="148.20" y1="214.40" x2="148.20" y2="274.90" stroke="#7a7a7a" stroke-width="0.6"/><polygon points="103.70,282.30 151.00,282.30 151.00,279.10 198.80,279.10 198.80,291.00 103.70,291.00" fill="none" stroke="#ef7f86" stroke-width="0.55"/><line x1="151.00" y1="282.30" x2="151.00" y2="286.50" stroke="#ef7f86" stroke-width="0.5"/><rect x="136.50" y="286.80" width="5.50" height="1.00" fill="#999" stroke="none" stroke-width="0.5" /><polygon points="121.10,296.70 151.00,296.70 151.00,293.70 180.40,293.70 180.40,305.50 121.10,305.50" fill="none" stroke="#ef7f86" stroke-width="0.55"/><line x1="151.00" y1="301.50" x2="151.00" y2="305.50" stroke="#ef7f86" stroke-width="0.5"/><rect x="158.50" y="301.20" width="5.50" height="1.00" fill="#999" stroke="none" stroke-width="0.5" /><circle cx="106.3" cy="320" r="9.1" fill="none" stroke="#8a8a8a" stroke-width="0.5"/><circle cx="106.3" cy="338.4" r="9.1" fill="none" stroke="#8a8a8a" stroke-width="0.5"/><circle cx="124.7" cy="320" r="9.1" fill="none" stroke="#8a8a8a" stroke-width="0.5"/><circle cx="124.7" cy="338.4" r="9.1" fill="none" stroke="#8a8a8a" stroke-width="0.5"/><rect x="137.70" y="328.30" width="35.30" height="52.60" fill="none" stroke="#ef7f86" stroke-width="0.55" /><line x1="137.70" y1="355.40" x2="173.00" y2="355.40" stroke="#ef7f86" stroke-width="0.55"/><line x1="155.40" y1="328.30" x2="155.40" y2="380.90" stroke="#ef7f86" stroke-width="0.55"/><rect x="174.40" y="328.30" width="35.90" height="20.50" fill="none" stroke="#ef7f86" stroke-width="0.55" /><rect x="174.40" y="350.80" width="35.90" height="30.10" fill="none" stroke="#ef7f86" stroke-width="0.55" /><line x1="192.40" y1="328.30" x2="192.40" y2="380.90" stroke="#ef7f86" stroke-width="0.55"/><line x1="146.50" y1="328.30" x2="146.50" y2="339.30" stroke="#e8606c" stroke-width="0.85"/><line x1="164.30" y1="339.70" x2="164.30" y2="355.40" stroke="#e8606c" stroke-width="0.85"/><line x1="146.50" y1="355.40" x2="146.50" y2="366.70" stroke="#e8606c" stroke-width="0.85"/><line x1="164.30" y1="367.10" x2="164.30" y2="380.90" stroke="#e8606c" stroke-width="0.85"/><line x1="183.30" y1="328.30" x2="183.30" y2="337.40" stroke="#e8606c" stroke-width="0.85"/><line x1="201.20" y1="337.00" x2="201.20" y2="348.80" stroke="#e8606c" stroke-width="0.85"/><line x1="183.30" y1="350.80" x2="183.30" y2="364.10" stroke="#e8606c" stroke-width="0.85"/><line x1="201.20" y1="363.90" x2="201.20" y2="380.90" stroke="#e8606c" stroke-width="0.85"/><rect x="141.50" y="342.50" width="3.50" height="1.00" fill="#999" stroke="none" stroke-width="0.5" /><rect x="178.50" y="342.30" width="3.50" height="1.00" fill="#999" stroke="none" stroke-width="0.5" /><rect x="144.00" y="375.50" width="5.00" height="1.00" fill="#999" stroke="none" stroke-width="0.5" /><rect x="178.50" y="370.20" width="5.00" height="1.00" fill="#999" stroke="none" stroke-width="0.5" /><text x="245.50" y="217.20" font-size="3.0" fill="#444" font-weight="bold" text-anchor="start" font-family="Liberation Sans" textLength="12" lengthAdjust="spacingAndGlyphs">Tisch Platten (4x)</text><text x="339.30" y="219.20" font-size="5.0" fill="#cc2b35" font-weight="normal" text-anchor="start" font-family="Liberation Sans" textLength="4.6" lengthAdjust="spacingAndGlyphs">V1</text><rect x="247.40" y="222.50" width="48.20" height="30.90" fill="none" stroke="#454545" stroke-width="0.45" /><rect x="301.50" y="222.80" width="47.90" height="29.50" fill="none" stroke="#454545" stroke-width="0.45" /><rect x="244.00" y="234.00" width="1.00" height="8.00" fill="#555" stroke="none" stroke-width="0.5" /><rect x="299.60" y="233.00" width="1.00" height="8.00" fill="#555" stroke="none" stroke-width="0.5" /><rect x="269.50" y="255.50" width="8.00" height="1.10" fill="#555" stroke="none" stroke-width="0.5" /><rect x="320.00" y="254.20" width="7.00" height="1.10" fill="#555" stroke="none" stroke-width="0.5" /><text x="289.00" y="251.60" font-size="2.2" fill="#666" font-weight="normal" text-anchor="start" font-family="Liberation Sans">3x</text><text x="343.00" y="250.60" font-size="2.2" fill="#666" font-weight="normal" text-anchor="start" font-family="Liberation Sans">3x</text><text x="245.50" y="265.10" font-size="3.0" fill="#444" font-weight="bold" text-anchor="start" font-family="Liberation Sans" textLength="11.5" lengthAdjust="spacingAndGlyphs">Tisch Abstand (4x)</text><polygon points="250.00,272.40 298.00,272.40 298.00,269.80 345.00,269.80 345.00,281.20 250.00,281.20" fill="none" stroke="#454545" stroke-width="0.45"/><line x1="250.00" y1="282.80" x2="345.00" y2="282.80" stroke="#454545" stroke-width="0.45"/><rect x="272.00" y="270.60" width="3.00" height="1.00" fill="#606060" stroke="none" stroke-width="0.5" /><rect x="321.00" y="267.80" width="3.00" height="1.00" fill="#606060" stroke="none" stroke-width="0.5" /><rect x="302.00" y="283.80" width="3.00" height="1.00" fill="#606060" stroke="none" stroke-width="0.5" /><polygon points="250.30,291.50 279.90,291.50 279.90,288.20 309.30,288.20 309.30,300.30 250.30,300.30" fill="none" stroke="#454545" stroke-width="0.45"/><line x1="250.30" y1="302.30" x2="309.30" y2="302.30" stroke="#454545" stroke-width="0.45"/><rect x="262.00" y="289.80" width="3.00" height="1.00" fill="#606060" stroke="none" stroke-width="0.5" /><rect x="293.00" y="286.50" width="3.00" height="1.00" fill="#606060" stroke="none" stroke-width="0.5" /><rect x="279.00" y="303.50" width="3.00" height="1.00" fill="#606060" stroke="none" stroke-width="0.5" /><text x="245.50" y="310.20" font-size="3.0" fill="#444" font-weight="bold" text-anchor="start" font-family="Liberation Sans" textLength="11.5" lengthAdjust="spacingAndGlyphs">Tisch Abstand (4x)</text><rect x="245.50" y="310.90" width="9.00" height="0.40" fill="#aaa" stroke="none" stroke-width="0.5" /><rect x="246.30" y="316.50" width="41.20" height="2.80" fill="#f4f4f4" stroke="#4a4a4a" stroke-width="0.4" /><rect x="294.00" y="316.50" width="23.70" height="2.80" fill="#f4f4f4" stroke="#4a4a4a" stroke-width="0.4" /><rect x="248.00" y="321.00" width="7.00" height="1.10" fill="#555" stroke="none" stroke-width="0.5" /><rect x="295.50" y="321.00" width="7.00" height="1.10" fill="#555" stroke="none" stroke-width="0.5" /><text x="245.50" y="331.70" font-size="3.0" fill="#444" font-weight="bold" text-anchor="start" font-family="Liberation Sans" textLength="11.5" lengthAdjust="spacingAndGlyphs">Tisch Abstand (4x)</text><rect x="245.50" y="332.40" width="9.00" height="0.40" fill="#aaa" stroke="none" stroke-width="0.5" /><rect x="246.00" y="335.60" width="37.80" height="5.10" fill="none" stroke="#4a4a4a" stroke-width="0.4" /><rect x="299.60" y="335.60" width="49.30" height="5.10" fill="none" stroke="#4a4a4a" stroke-width="0.4" /><rect x="246.50" y="342.00" width="7.00" height="1.10" fill="#555" stroke="none" stroke-width="0.5" /><rect x="300.50" y="342.00" width="7.00" height="1.10" fill="#555" stroke="none" stroke-width="0.5" /><rect x="246.00" y="346.40" width="41.50" height="4.80" fill="none" stroke="#4a4a4a" stroke-width="0.4" /><rect x="299.60" y="346.40" width="46.40" height="4.80" fill="none" stroke="#4a4a4a" stroke-width="0.4" /><rect x="247.00" y="353.00" width="7.00" height="1.10" fill="#555" stroke="none" stroke-width="0.5" /><rect x="300.50" y="353.00" width="7.00" height="1.10" fill="#555" stroke="none" stroke-width="0.5" /><text x="245.50" y="405.90" font-size="3.0" fill="#444" font-weight="bold" text-anchor="start" font-family="Liberation Sans" textLength="12" lengthAdjust="spacingAndGlyphs">Tisch Platten (4x)</text><text x="340.30" y="407.60" font-size="4.6" fill="#cc2b35" font-weight="normal" text-anchor="start" font-family="Liberation Sans" textLength="17.2" lengthAdjust="spacingAndGlyphs">Corrected</text><rect x="247.30" y="411.50" width="48.40" height="30.80" fill="none" stroke="#454545" stroke-width="0.45" /><rect x="301.60" y="411.50" width="47.60" height="30.00" fill="none" stroke="#454545" stroke-width="0.45" /><rect x="244.00" y="423.00" width="1.00" height="8.00" fill="#555" stroke="none" stroke-width="0.5" /><rect x="299.80" y="422.00" width="1.00" height="8.00" fill="#555" stroke="none" stroke-width="0.5" /><rect x="269.50" y="444.50" width="8.00" height="1.10" fill="#555" stroke="none" stroke-width="0.5" /><rect x="320.00" y="443.30" width="7.00" height="1.10" fill="#555" stroke="none" stroke-width="0.5" /><text x="288.50" y="440.80" font-size="3.2" fill="#888" font-weight="normal" text-anchor="start" font-family="Liberation Sans" textLength="3.5" lengthAdjust="spacingAndGlyphs">3x</text><text x="342.50" y="440.00" font-size="3.2" fill="#888" font-weight="normal" text-anchor="start" font-family="Liberation Sans" textLength="3.5" lengthAdjust="spacingAndGlyphs">3x</text><text x="245.50" y="454.10" font-size="3.0" fill="#444" font-weight="bold" text-anchor="start" font-family="Liberation Sans" textLength="11.5" lengthAdjust="spacingAndGlyphs">Tisch Abstand (4x)</text><polygon points="250.40,462.30 297.30,462.30 297.30,458.40 344.60,458.40 344.60,473.00 250.40,473.00" fill="none" stroke="#454545" stroke-width="0.45"/><line x1="250.40" y1="474.60" x2="344.60" y2="474.60" stroke="#454545" stroke-width="0.45"/><rect x="272.00" y="460.00" width="3.00" height="1.00" fill="#606060" stroke="none" stroke-width="0.5" /><rect x="321.00" y="456.50" width="3.00" height="1.00" fill="#606060" stroke="none" stroke-width="0.5" /><rect x="300.00" y="475.50" width="3.00" height="1.00" fill="#606060" stroke="none" stroke-width="0.5" /><polygon points="250.60,481.00 280.10,481.00 280.10,477.40 309.30,477.40 309.30,491.60 250.60,491.60" fill="none" stroke="#454545" stroke-width="0.45"/><line x1="250.60" y1="493.30" x2="309.30" y2="493.30" stroke="#454545" stroke-width="0.45"/><rect x="262.00" y="479.00" width="3.00" height="1.00" fill="#606060" stroke="none" stroke-width="0.5" /><rect x="293.00" y="475.80" width="3.00" height="1.00" fill="#606060" stroke="none" stroke-width="0.5" /><rect x="279.00" y="494.50" width="3.00" height="1.00" fill="#606060" stroke="none" stroke-width="0.5" /><text x="245.50" y="506.40" font-size="3.0" fill="#444" font-weight="bold" text-anchor="start" font-family="Liberation Sans" textLength="11.5" lengthAdjust="spacingAndGlyphs">Tisch Abstand (4x)</text><rect x="245.50" y="507.10" width="9.00" height="0.40" fill="#aaa" stroke="none" stroke-width="0.5" /><rect x="246.50" y="512.50" width="41.90" height="2.40" fill="#f4f4f4" stroke="#4a4a4a" stroke-width="0.4" /><rect x="294.30" y="512.50" width="24.20" height="2.40" fill="#f4f4f4" stroke="#4a4a4a" stroke-width="0.4" /><rect x="248.00" y="517.00" width="7.00" height="1.10" fill="#555" stroke="none" stroke-width="0.5" /><rect x="296.00" y="517.00" width="7.00" height="1.10" fill="#555" stroke="none" stroke-width="0.5" /><text x="245.50" y="527.60" font-size="3.0" fill="#444" font-weight="bold" text-anchor="start" font-family="Liberation Sans" textLength="11.5" lengthAdjust="spacingAndGlyphs">Tisch Abstand (4x)</text><rect x="245.50" y="528.30" width="9.00" height="0.40" fill="#aaa" stroke="none" stroke-width="0.5" /><rect x="246.00" y="531.40" width="38.50" height="5.30" fill="none" stroke="#4a4a4a" stroke-width="0.4" /><rect x="300.10" y="531.40" width="49.50" height="5.30" fill="none" stroke="#4a4a4a" stroke-width="0.4" /><rect x="246.50" y="538.00" width="7.00" height="1.10" fill="#555" stroke="none" stroke-width="0.5" /><rect x="301.00" y="538.00" width="7.00" height="1.10" fill="#555" stroke="none" stroke-width="0.5" /><rect x="246.00" y="542.00" width="42.40" height="5.50" fill="none" stroke="#4a4a4a" stroke-width="0.4" /><rect x="300.10" y="542.00" width="46.40" height="5.50" fill="none" stroke="#4a4a4a" stroke-width="0.4" /><rect x="247.00" y="549.00" width="7.00" height="1.10" fill="#555" stroke="none" stroke-width="0.5" /><rect x="301.00" y="549.00" width="7.00" height="1.10" fill="#555" stroke="none" stroke-width="0.5" /><line x1="248.30" y1="466.30" x2="248.30" y2="468.70" stroke="#e0303a" stroke-width="0.6"/><line x1="297.00" y1="463.30" x2="297.00" y2="465.70" stroke="#e0303a" stroke-width="0.6"/><line x1="346.50" y1="466.30" x2="346.50" y2="468.70" stroke="#e0303a" stroke-width="0.6"/><line x1="248.50" y1="484.80" x2="248.50" y2="487.20" stroke="#e0303a" stroke-width="0.6"/><line x1="278.50" y1="485.80" x2="278.50" y2="488.20" stroke="#e0303a" stroke-width="0.6"/><line x1="311.00" y1="483.30" x2="311.00" y2="485.70" stroke="#e0303a" stroke-width="0.6"/><text x="389.00" y="217.20" font-size="3.0" fill="#444" font-weight="bold" text-anchor="start" font-family="Liberation Sans" textLength="10.5" lengthAdjust="spacingAndGlyphs">Ober Seck (4x)</text><rect x="393.30" y="237.40" width="18.20" height="27.00" fill="none" stroke="#4a4a4a" stroke-width="0.45" /><line x1="402.00" y1="237.40" x2="402.00" y2="251.00" stroke="#4a4a4a" stroke-width="0.45"/><line x1="401.20" y1="251.00" x2="402.80" y2="251.00" stroke="#4a4a4a" stroke-width="0.4"/><line x1="393.30" y1="236.20" x2="411.50" y2="236.20" stroke="#666" stroke-width="0.3"/><rect x="393.30" y="234.60" width="1.00" height="1.60" fill="#555" stroke="none" stroke-width="0.5" /><rect x="409.00" y="234.60" width="2.50" height="1.20" fill="#555" stroke="none" stroke-width="0.5" /><rect x="390.60" y="249.90" width="1.00" height="2.00" fill="#555" stroke="none" stroke-width="0.5" /><rect x="401.40" y="265.40" width="2.50" height="1.00" fill="#555" stroke="none" stroke-width="0.5" /><rect x="415.20" y="237.40" width="18.30" height="27.00" fill="none" stroke="#4a4a4a" stroke-width="0.45" /><line x1="424.00" y1="264.40" x2="424.00" y2="247.00" stroke="#4a4a4a" stroke-width="0.45"/><line x1="423.20" y1="247.00" x2="424.80" y2="247.00" stroke="#4a4a4a" stroke-width="0.4"/><line x1="415.20" y1="236.20" x2="433.50" y2="236.20" stroke="#666" stroke-width="0.3"/><rect x="415.20" y="234.60" width="1.00" height="1.60" fill="#555" stroke="none" stroke-width="0.5" /><rect x="431.00" y="234.60" width="2.50" height="1.20" fill="#555" stroke="none" stroke-width="0.5" /><rect x="412.50" y="249.90" width="1.00" height="2.00" fill="#555" stroke="none" stroke-width="0.5" /><rect x="423.35" y="265.40" width="2.50" height="1.00" fill="#555" stroke="none" stroke-width="0.5" /><rect x="446.60" y="243.20" width="18.30" height="20.50" fill="none" stroke="#4a4a4a" stroke-width="0.45" /><line x1="456.00" y1="243.20" x2="456.00" y2="254.00" stroke="#4a4a4a" stroke-width="0.45"/><line x1="455.20" y1="254.00" x2="456.80" y2="254.00" stroke="#4a4a4a" stroke-width="0.4"/><line x1="446.60" y1="242.00" x2="464.90" y2="242.00" stroke="#666" stroke-width="0.3"/><rect x="446.60" y="240.40" width="1.00" height="1.60" fill="#555" stroke="none" stroke-width="0.5" /><rect x="462.40" y="240.40" width="2.50" height="1.20" fill="#555" stroke="none" stroke-width="0.5" /><rect x="443.90" y="252.45" width="1.00" height="2.00" fill="#555" stroke="none" stroke-width="0.5" /><rect x="454.75" y="264.70" width="2.50" height="1.00" fill="#555" stroke="none" stroke-width="0.5" /><rect x="467.40" y="243.20" width="18.20" height="20.50" fill="none" stroke="#4a4a4a" stroke-width="0.45" /><line x1="476.50" y1="263.70" x2="476.50" y2="250.00" stroke="#4a4a4a" stroke-width="0.45"/><line x1="475.70" y1="250.00" x2="477.30" y2="250.00" stroke="#4a4a4a" stroke-width="0.4"/><line x1="467.40" y1="242.00" x2="485.60" y2="242.00" stroke="#666" stroke-width="0.3"/><rect x="467.40" y="240.40" width="1.00" height="1.60" fill="#555" stroke="none" stroke-width="0.5" /><rect x="483.10" y="240.40" width="2.50" height="1.20" fill="#555" stroke="none" stroke-width="0.5" /><rect x="464.70" y="252.45" width="1.00" height="2.00" fill="#555" stroke="none" stroke-width="0.5" /><rect x="475.50" y="264.70" width="2.50" height="1.00" fill="#555" stroke="none" stroke-width="0.5" /><rect x="394.00" y="279.00" width="17.60" height="24.00" fill="none" stroke="#4a4a4a" stroke-width="0.45" /><line x1="402.80" y1="279.00" x2="402.80" y2="290.50" stroke="#4a4a4a" stroke-width="0.45"/><line x1="402.00" y1="290.50" x2="403.60" y2="290.50" stroke="#4a4a4a" stroke-width="0.4"/><line x1="394.00" y1="277.80" x2="411.60" y2="277.80" stroke="#666" stroke-width="0.3"/><rect x="394.00" y="276.20" width="1.00" height="1.60" fill="#555" stroke="none" stroke-width="0.5" /><rect x="409.10" y="276.20" width="2.50" height="1.20" fill="#555" stroke="none" stroke-width="0.5" /><rect x="391.30" y="290.00" width="1.00" height="2.00" fill="#555" stroke="none" stroke-width="0.5" /><rect x="401.80" y="304.00" width="2.50" height="1.00" fill="#555" stroke="none" stroke-width="0.5" /><rect x="415.00" y="279.00" width="18.00" height="24.00" fill="none" stroke="#4a4a4a" stroke-width="0.45" /><line x1="424.00" y1="303.00" x2="424.00" y2="285.00" stroke="#4a4a4a" stroke-width="0.45"/><line x1="423.20" y1="285.00" x2="424.80" y2="285.00" stroke="#4a4a4a" stroke-width="0.4"/><line x1="415.00" y1="277.80" x2="433.00" y2="277.80" stroke="#666" stroke-width="0.3"/><rect x="415.00" y="276.20" width="1.00" height="1.60" fill="#555" stroke="none" stroke-width="0.5" /><rect x="430.50" y="276.20" width="2.50" height="1.20" fill="#555" stroke="none" stroke-width="0.5" /><rect x="412.30" y="290.00" width="1.00" height="2.00" fill="#555" stroke="none" stroke-width="0.5" /><rect x="423.00" y="304.00" width="2.50" height="1.00" fill="#555" stroke="none" stroke-width="0.5" /><rect x="447.40" y="273.00" width="17.60" height="29.40" fill="none" stroke="#4a4a4a" stroke-width="0.45" /><line x1="456.20" y1="273.00" x2="456.20" y2="287.50" stroke="#4a4a4a" stroke-width="0.45"/><line x1="455.40" y1="287.50" x2="457.00" y2="287.50" stroke="#4a4a4a" stroke-width="0.4"/><line x1="447.40" y1="271.80" x2="465.00" y2="271.80" stroke="#666" stroke-width="0.3"/><rect x="447.40" y="270.20" width="1.00" height="1.60" fill="#555" stroke="none" stroke-width="0.5" /><rect x="462.50" y="270.20" width="2.50" height="1.20" fill="#555" stroke="none" stroke-width="0.5" /><rect x="444.70" y="286.70" width="1.00" height="2.00" fill="#555" stroke="none" stroke-width="0.5" /><rect x="455.20" y="303.40" width="2.50" height="1.00" fill="#555" stroke="none" stroke-width="0.5" /><rect x="467.40" y="273.00" width="18.60" height="29.40" fill="none" stroke="#4a4a4a" stroke-width="0.45" /><line x1="476.70" y1="302.40" x2="476.70" y2="284.00" stroke="#4a4a4a" stroke-width="0.45"/><line x1="475.90" y1="284.00" x2="477.50" y2="284.00" stroke="#4a4a4a" stroke-width="0.4"/><line x1="467.40" y1="271.80" x2="486.00" y2="271.80" stroke="#666" stroke-width="0.3"/><rect x="467.40" y="270.20" width="1.00" height="1.60" fill="#555" stroke="none" stroke-width="0.5" /><rect x="483.50" y="270.20" width="2.50" height="1.20" fill="#555" stroke="none" stroke-width="0.5" /><rect x="464.70" y="286.70" width="1.00" height="2.00" fill="#555" stroke="none" stroke-width="0.5" /><rect x="475.70" y="303.40" width="2.50" height="1.00" fill="#555" stroke="none" stroke-width="0.5" /><line x1="415.00" y1="265.70" x2="433.50" y2="265.70" stroke="#666" stroke-width="0.4"/><line x1="467.40" y1="265.20" x2="485.60" y2="265.20" stroke="#666" stroke-width="0.4"/><line x1="415.00" y1="304.50" x2="433.00" y2="304.50" stroke="#666" stroke-width="0.4"/><line x1="467.40" y1="304.00" x2="486.00" y2="304.00" stroke="#666" stroke-width="0.4"/><text x="389.00" y="314.10" font-size="3.0" fill="#444" font-weight="bold" text-anchor="start" font-family="Liberation Sans" textLength="10.5" lengthAdjust="spacingAndGlyphs">Ober Tisch (4x)</text><circle cx="399" cy="326.6" r="9" fill="none" stroke="#8a8a8a" stroke-width="0.5"/><line x1="390.00" y1="326.80" x2="408.00" y2="326.80" stroke="#666" stroke-width="0.5"/><rect x="397.50" y="325.20" width="3.00" height="0.90" fill="#555" stroke="none" stroke-width="0.5" /><rect x="406.50" y="334.50" width="2.50" height="1.00" fill="#606060" stroke="none" stroke-width="0.5" /><text x="535.00" y="217.00" font-size="3.0" fill="#444" font-weight="bold" text-anchor="start" font-family="Liberation Sans" textLength="7" lengthAdjust="spacingAndGlyphs">Aufbau</text><polygon points="541.7,241.1 567.2,227.2 571.3,229.4 592.3,218.0 603.4,222.9 608.3,220.2 624.0,229.1 597.9,244.8 599.0,252.6 575.6,261.3 557.2,258.8 557.2,252.6 545.0,244.2" fill="#c0b08a" /><polygon points="571.3,229.4 592.3,218.0 603.4,222.9 598.0,226.0 593.0,223.5 573.0,234.0" fill="#a99a76" /><polygon points="603.4,222.9 608.3,220.2 612.0,222.3 606.0,225.5" fill="#a99a76" /><polygon points="557.2,252.6 590.5,236.2 597.5,241.5 599.0,252.6 575.6,261.3 557.8,258.8" fill="#d6bf90" /><polygon points="560.0,257.8 596.0,243.5 598.5,252.3 575.6,260.6" fill="#c0b08a" /><polygon points="541.7,241.1 567.2,227.2 571.3,229.4 570.5,231.2 567.3,229.4 543.3,242.6" fill="#e8d3a2" /><polygon points="566.9,232.5 592.3,218.0 593.5,220.2 568.2,234.2" fill="#e8d3a2" /><polygon points="592.3,218.0 603.4,222.9 603.1,224.8 592.6,220.2" fill="#e8d3a2" /><polygon points="608.3,220.2 624.0,229.1 623.0,231.0 608.1,222.3" fill="#e8d3a2" /><rect x="541.7" y="241.1" width="2.9" height="28.8" fill="#e8d3a2"/><rect x="621.6" y="229.1" width="2.8" height="30.3" fill="#e8d3a2"/><rect x="571.5" y="261" width="3.3" height="26.7" fill="#e8d3a2"/><rect x="590.6" y="220.5" width="3.6" height="21.2" fill="#e8d3a2"/><line x1="568.3" y1="234.2" x2="599.5" y2="253.2" stroke="#9a9a9a" stroke-width="0.4"/><line x1="560" y1="257.5" x2="612" y2="232" stroke="#9a9a9a" stroke-width="0.4"/><circle cx="559.2" cy="246" r="0.95" fill="#222"/><circle cx="559.5" cy="249.5" r="0.95" fill="#222"/><circle cx="576.4" cy="256.8" r="0.95" fill="#222"/><circle cx="574.4" cy="260.6" r="0.95" fill="#222"/><circle cx="592.3" cy="224.3" r="0.95" fill="#222"/><circle cx="597.2" cy="243.4" r="0.95" fill="#222"/><circle cx="612.3" cy="234" r="0.95" fill="#222"/><circle cx="571" cy="235.6" r="0.95" fill="#222"/><circle cx="603.3" cy="230.6" r="0.95" fill="#222"/><circle cx="547.3" cy="243.8" r="0.95" fill="#222"/><g stroke="#555" stroke-width="0.35" fill="none"><path d="M559.5 249.6 L537.5 277.5"/><path d="M574.4 261.3 L563.6 289.5"/><path d="M597.2 243.4 L602.1 255.1"/><path d="M612.3 234 L623 263.7"/></g><rect x="535.50" y="278.30" width="3.00" height="1.00" fill="#555" stroke="none" stroke-width="0.5" /><rect x="563.00" y="290.30" width="3.00" height="1.00" fill="#555" stroke="none" stroke-width="0.5" /><rect x="602.50" y="258.00" width="3.00" height="1.00" fill="#555" stroke="none" stroke-width="0.5" /><rect x="624.30" y="266.20" width="3.00" height="1.00" fill="#555" stroke="none" stroke-width="0.5" /><text x="535.00" y="306.70" font-size="3.0" fill="#444" font-weight="bold" text-anchor="start" font-family="Liberation Sans" textLength="9.5" lengthAdjust="spacingAndGlyphs">Seitenansicht</text><rect x="539.00" y="315.40" width="47.20" height="12.10" fill="none" stroke="#555" stroke-width="0.4" /><rect x="586.20" y="311.80" width="47.20" height="15.70" fill="none" stroke="#555" stroke-width="0.4" /><line x1="539.00" y1="315.70" x2="586.20" y2="315.70" stroke="#5b6db5" stroke-width="0.8"/><line x1="586.20" y1="312.10" x2="633.40" y2="312.10" stroke="#5b6db5" stroke-width="0.8"/><line x1="539.00" y1="320.70" x2="586.20" y2="320.70" stroke="#e8547a" stroke-width="0.9"/><line x1="586.20" y1="323.40" x2="633.40" y2="323.40" stroke="#e8547a" stroke-width="0.9"/><rect x="544.00" y="317.30" width="42.00" height="2.00" fill="#c9e8b8" stroke="none" stroke-width="0.5" /><rect x="544.00" y="322.20" width="42.00" height="2.00" fill="#c9e8b8" stroke="none" stroke-width="0.5" /><rect x="587.00" y="313.50" width="41.00" height="2.20" fill="#c9e8b8" stroke="none" stroke-width="0.5" /><rect x="587.00" y="324.80" width="41.00" height="2.00" fill="#c9e8b8" stroke="none" stroke-width="0.5" /><line x1="586.20" y1="315.40" x2="586.20" y2="327.50" stroke="#666" stroke-width="0.7"/><line x1="635.50" y1="311.80" x2="635.50" y2="327.50" stroke="#555" stroke-width="0.35"/><rect x="636.50" y="318.50" width="3.00" height="1.00" fill="#444" stroke="none" stroke-width="0.5" /><rect x="636.50" y="325.00" width="2.00" height="1.00" fill="#444" stroke="none" stroke-width="0.5" /><rect x="534.50" y="317.50" width="2.50" height="1.00" fill="#444" stroke="none" stroke-width="0.5" /><rect x="534.00" y="324.00" width="3.00" height="1.00" fill="#444" stroke="none" stroke-width="0.5" /><line x1="538.50" y1="315.40" x2="538.50" y2="327.50" stroke="#555" stroke-width="0.35"/><rect x="535.00" y="332.60" width="2.30" height="2.20" fill="#5b6db5" stroke="none" stroke-width="0.5" /><text x="538.30" y="334.90" font-size="2.6" fill="#5b6db5" font-weight="bold" text-anchor="start" font-family="Liberation Sans">Tischfläche 810x510</text><rect x="535.00" y="337.00" width="2.30" height="2.20" fill="#e8547a" stroke="none" stroke-width="0.5" /><text x="538.30" y="339.30" font-size="2.6" fill="#e8547a" font-weight="bold" text-anchor="start" font-family="Liberation Sans">Tischfläche 600x340</text><rect x="535.00" y="342.20" width="2.30" height="2.20" fill="#c9e8b8" stroke="none" stroke-width="0.5" /><text x="538.30" y="344.50" font-size="2.6" fill="#8cc878" font-weight="normal" text-anchor="start" font-family="Liberation Sans">Tischgestell (Rahmen) 40x70x740</text><rect x="587.80" y="345.70" width="28.30" height="17.80" fill="#ee6289" stroke="none" stroke-width="0.5" /><rect x="616.10" y="345.70" width="27.90" height="17.80" fill="#909fcd" stroke="none" stroke-width="0.5" /><rect x="587.80" y="363.50" width="28.30" height="17.20" fill="#909fcd" stroke="none" stroke-width="0.5" /><rect x="616.10" y="363.50" width="27.90" height="17.20" fill="#ee6289" stroke="none" stroke-width="0.5" /><rect x="591.50" y="348.60" width="48.50" height="29.60" fill="none" stroke="#6a6a80" stroke-width="0.5" /><rect x="592.50" y="349.60" width="46.50" height="27.60" fill="none" stroke="#7e7e98" stroke-width="0.35" /><line x1="616.10" y1="345.70" x2="616.10" y2="380.70" stroke="#555" stroke-width="0.5"/><line x1="587.80" y1="363.50" x2="644.00" y2="363.50" stroke="#666" stroke-width="0.4"/></svg>
<svg class="a" style="left:35.5px;top:62.0px" width="6" height="4" viewBox="0 0 6 4"><path d="M2.6 0.5 L0.8 2 L2.6 3.5 M5 0.5 L3.2 2 L5 3.5" fill="none" stroke="#9a9a9a" stroke-width="0.6"/></svg>
<div class="a" style="left:47.0px;top:70.6px;width:11.0px;height:1.2px;background:#3e3e3e"></div>
<svg class="a" style="left:38.0px;top:80.0px" width="12" height="12" viewBox="0 0 12 12"><path d="M3 1.2 L9.2 6.8 L6 6.9 L3 10.2 Z" fill="none" stroke="#c9c9c9" stroke-width="0.9" stroke-linejoin="round"/></svg>
<svg class="a" style="left:55.3px;top:80.0px" width="12" height="12" viewBox="0 0 12 12"><path d="M3 1.2 L9.4 6.9 L6 7 L3 10.3 Z" fill="#c9c9c9"/></svg>
<svg class="a" style="left:66.5px;top:89.8px" width="2.2" height="2.2" viewBox="0 0 2.2 2.2"><path d="M2 0 L2 2 L0 2 Z" fill="#bdbdbd"/></svg>
<svg class="a" style="left:38.0px;top:93.7px" width="12" height="12" viewBox="0 0 12 12"><path d="M2.2 10 L7.2 5" stroke="#c9c9c9" stroke-width="1.2"/><circle cx="4.5" cy="2.8" r="0.8" fill="#c9c9c9"/><circle cx="8" cy="2" r="0.7" fill="#c9c9c9"/><circle cx="8.6" cy="5" r="0.6" fill="#c9c9c9"/></svg>
<svg class="a" style="left:55.3px;top:93.7px" width="12" height="12" viewBox="0 0 12 12"><ellipse cx="5.2" cy="4" rx="4" ry="2.2" fill="none" stroke="#c9c9c9" stroke-width="0.8"/><path d="M5.5 3.6 L10.2 7.6 L7.6 7.8 L5.5 10.5 Z" fill="#c9c9c9"/></svg>
<svg class="a" style="left:38.0px;top:107.3px" width="12" height="12" viewBox="0 0 12 12"><path d="M1.5 10.5 L3 5.5 L6.5 3 L9 5.5 L6.5 9 Z" fill="#c9c9c9"/><path d="M6.8 2.6 L8 1.4 L10.6 4 L9.4 5.2 Z" fill="#c9c9c9"/><path d="M1.8 10.2 L5 7" stroke="#535353" stroke-width="0.6"/></svg>
<svg class="a" style="left:49.2px;top:117.1px" width="2.2" height="2.2" viewBox="0 0 2.2 2.2"><path d="M2 0 L2 2 L0 2 Z" fill="#bdbdbd"/></svg>
<svg class="a" style="left:55.3px;top:107.3px" width="12" height="12" viewBox="0 0 12 12"><path d="M3 10.5 L4.2 6 L7.2 3.8 L9.4 6 L7.2 9.2 Z" fill="#c9c9c9"/><path d="M7.4 3.4 L8.5 2.3 L10.8 4.6 L9.7 5.7 Z" fill="#c9c9c9"/><path d="M2.8 1 C1.5 3 3.5 5 1.5 8" fill="none" stroke="#c9c9c9" stroke-width="0.6"/></svg>
<svg class="a" style="left:38.0px;top:120.9px" width="12" height="12" viewBox="0 0 12 12"><path d="M1.8 1.8 L10.2 1.8 L10.2 3.6 M1.8 3.6 L1.8 1.8 M6 1.8 L6 10.2 M4 10.2 L8 10.2" fill="none" stroke="#c9c9c9" stroke-width="1.5"/></svg>
<svg class="a" style="left:49.2px;top:130.7px" width="2.2" height="2.2" viewBox="0 0 2.2 2.2"><path d="M2 0 L2 2 L0 2 Z" fill="#bdbdbd"/></svg>
<svg class="a" style="left:55.3px;top:120.9px" width="12" height="12" viewBox="0 0 12 12"><path d="M2 10 L10 2" stroke="#c9c9c9" stroke-width="0.9"/></svg>
<svg class="a" style="left:66.5px;top:130.7px" width="2.2" height="2.2" viewBox="0 0 2.2 2.2"><path d="M2 0 L2 2 L0 2 Z" fill="#bdbdbd"/></svg>
<svg class="a" style="left:38.0px;top:134.4px" width="12" height="12" viewBox="0 0 12 12"><rect x="1.5" y="2" width="9" height="8" rx="0.5" fill="#8a8a8a" stroke="#c9c9c9" stroke-width="0.9"/></svg>
<svg class="a" style="left:49.2px;top:144.2px" width="2.2" height="2.2" viewBox="0 0 2.2 2.2"><path d="M2 0 L2 2 L0 2 Z" fill="#bdbdbd"/></svg>
<svg class="a" style="left:55.3px;top:134.4px" width="12" height="12" viewBox="0 0 12 12"><path d="M5 7.5 L10.5 1.2 L11 1.7 L6.3 8.5 Z" fill="#c9c9c9"/><path d="M4.6 7.3 C3 7.5 3.5 9.5 1.5 10.5 C4 10.8 6 10 6.2 8.4 Z" fill="#c9c9c9"/></svg>
<svg class="a" style="left:66.5px;top:144.2px" width="2.2" height="2.2" viewBox="0 0 2.2 2.2"><path d="M2 0 L2 2 L0 2 Z" fill="#bdbdbd"/></svg>
<svg class="a" style="left:38.0px;top:148.3px" width="12" height="12" viewBox="0 0 12 12"><circle cx="4.6" cy="5" r="3.4" fill="#8a8a8a" stroke="#c9c9c9" stroke-width="0.8"/><path d="M3.5 10.5 L10.5 3.5" stroke="#c9c9c9" stroke-width="1.2"/></svg>
<svg class="a" style="left:49.2px;top:158.1px" width="2.2" height="2.2" viewBox="0 0 2.2 2.2"><path d="M2 0 L2 2 L0 2 Z" fill="#bdbdbd"/></svg>
<svg class="a" style="left:55.3px;top:148.3px" width="12" height="12" viewBox="0 0 12 12"><path d="M2 7.5 L7 2.5 L10 5.5 L5 10.5 Z" fill="none" stroke="#c9c9c9" stroke-width="0.9"/><path d="M5 4.5 L8 7.5 L10 5.5 L7 2.5 Z" fill="#c9c9c9"/></svg>
<svg class="a" style="left:66.5px;top:158.1px" width="2.2" height="2.2" viewBox="0 0 2.2 2.2"><path d="M2 0 L2 2 L0 2 Z" fill="#bdbdbd"/></svg>
<svg class="a" style="left:38.0px;top:162.0px" width="12" height="12" viewBox="0 0 12 12"><path d="M3.2 3.6 A4 4 0 1 0 6 2" fill="none" stroke="#c9c9c9" stroke-width="0.9" stroke-dasharray="1.5 0.5"/><path d="M1.5 2.5 L4 1.5 L4 4.5 Z" fill="#c9c9c9"/></svg>
<svg class="a" style="left:49.2px;top:171.8px" width="2.2" height="2.2" viewBox="0 0 2.2 2.2"><path d="M2 0 L2 2 L0 2 Z" fill="#bdbdbd"/></svg>
<svg class="a" style="left:55.3px;top:162.0px" width="12" height="12" viewBox="0 0 12 12"><rect x="1.5" y="5" width="5" height="5" fill="none" stroke="#c9c9c9" stroke-width="0.8"/><rect x="4.5" y="1.5" width="6" height="6" fill="none" stroke="#c9c9c9" stroke-width="0.8"/><path d="M6 6 L9.5 2.5" stroke="#c9c9c9" stroke-width="0.7"/></svg>
<svg class="a" style="left:66.5px;top:171.8px" width="2.2" height="2.2" viewBox="0 0 2.2 2.2"><path d="M2 0 L2 2 L0 2 Z" fill="#bdbdbd"/></svg>
<svg class="a" style="left:38.0px;top:175.6px" width="12" height="12" viewBox="0 0 12 12"><path d="M2 10 L4 7 L3.5 4 L5.5 2 L6.5 4 L9 5 L10.5 8 L7.5 7.5 L5 9.5 Z" fill="none" stroke="#c9c9c9" stroke-width="0.8"/><circle cx="4" cy="2.5" r="0.9" fill="#c9c9c9"/></svg>
<svg class="a" style="left:49.2px;top:185.4px" width="2.2" height="2.2" viewBox="0 0 2.2 2.2"><path d="M2 0 L2 2 L0 2 Z" fill="#bdbdbd"/></svg>
<svg class="a" style="left:55.3px;top:175.6px" width="12" height="12" viewBox="0 0 12 12"><path d="M2 1.5 L2 9 L4 7.2 L6 10 Z" fill="#c9c9c9"/><rect x="4" y="3" width="6.5" height="6.5" fill="none" stroke="#c9c9c9" stroke-width="0.7" stroke-dasharray="1.2 0.7"/></svg>
<svg class="a" style="left:66.5px;top:185.4px" width="2.2" height="2.2" viewBox="0 0 2.2 2.2"><path d="M2 0 L2 2 L0 2 Z" fill="#bdbdbd"/></svg>
<svg class="a" style="left:38.0px;top:189.1px" width="12" height="12" viewBox="0 0 12 12"><path d="M1.5 4 L5 2 L9 3 L9.5 6 L6 8 L2 7 Z" fill="none" stroke="#c9c9c9" stroke-width="0.8"/><path d="M7 6 L11 8.5 L8.8 9 L8.5 11 Z" fill="#c9c9c9"/></svg>
<svg class="a" style="left:49.2px;top:198.9px" width="2.2" height="2.2" viewBox="0 0 2.2 2.2"><path d="M2 0 L2 2 L0 2 Z" fill="#bdbdbd"/></svg>
<svg class="a" style="left:55.3px;top:189.1px" width="12" height="12" viewBox="0 0 12 12"><path d="M1.5 1.5 L1.5 10.5 L10.5 10.5 Z" fill="#7a7a7a"/><path d="M1.5 1.5 L6 4 L6 10.5 M1.5 4.5 L6.5 6 M1.5 7.5 L8 8.5 M1.5 1.5 L1.5 10.5 L7 10.5" fill="none" stroke="#c9c9c9" stroke-width="0.7"/></svg>
<svg class="a" style="left:66.5px;top:198.9px" width="2.2" height="2.2" viewBox="0 0 2.2 2.2"><path d="M2 0 L2 2 L0 2 Z" fill="#bdbdbd"/></svg>
<svg class="a" style="left:38.0px;top:202.8px" width="12" height="12" viewBox="0 0 12 12"><rect x="1.5" y="2" width="9" height="8" fill="none" stroke="#c9c9c9" stroke-width="0.8"/><path d="M1.5 5 C4 4 7 7 10.5 5.5 M4.5 2 C3.5 5 6 7 5 10 M7.5 2 C8 5 6.5 7 8 10" fill="none" stroke="#c9c9c9" stroke-width="0.6"/></svg>
<svg class="a" style="left:55.3px;top:202.8px" width="12" height="12" viewBox="0 0 12 12"><defs><linearGradient id="gg"><stop offset="0" stop-color="#222"/><stop offset="1" stop-color="#ddd"/></linearGradient></defs><rect x="1.5" y="2" width="9" height="8" fill="url(#gg)" stroke="#c9c9c9" stroke-width="0.7"/></svg>
<svg class="a" style="left:38.0px;top:216.5px" width="12" height="12" viewBox="0 0 12 12"><path d="M2 10 L10 2" stroke="#c9c9c9" stroke-width="0.9"/><path d="M1.5 8 L3.5 10.5 M8 1.5 L10.5 4 M4 6.5 L5 7.5 M6 4.5 L7 5.5" stroke="#c9c9c9" stroke-width="0.8"/></svg>
<svg class="a" style="left:55.3px;top:216.5px" width="12" height="12" viewBox="0 0 12 12"><path d="M2 10 L2.2 8.5 L7 3.8 L8.2 5 L3.5 9.8 Z" fill="none" stroke="#c9c9c9" stroke-width="0.8"/><path d="M6.5 3.2 L8.8 1 L11 3.2 L8.8 5.5 Z" fill="#c9c9c9"/></svg>
<svg class="a" style="left:66.5px;top:226.3px" width="2.2" height="2.2" viewBox="0 0 2.2 2.2"><path d="M2 0 L2 2 L0 2 Z" fill="#bdbdbd"/></svg>
<svg class="a" style="left:38.0px;top:230.1px" width="12" height="12" viewBox="0 0 12 12"><rect x="1.5" y="2" width="4" height="4" fill="#c9c9c9"/><circle cx="5" cy="6" r="2.6" fill="#999" stroke="#c9c9c9" stroke-width="0.5"/><circle cx="8" cy="8" r="2.6" fill="none" stroke="#c9c9c9" stroke-width="0.8"/></svg>
<svg class="a" style="left:55.3px;top:230.1px" width="12" height="12" viewBox="0 0 12 12"><path d="M3 4 L9 4 L9 10.5 L3 10.5 Z" fill="none" stroke="#c9c9c9" stroke-width="0.8"/><circle cx="6" cy="7" r="1.3" fill="#c9c9c9"/><rect x="5" y="1.5" width="2" height="2.5" fill="#c9c9c9"/><path d="M1 2 L1 5" stroke="#c9c9c9" stroke-width="0.6"/></svg>
<svg class="a" style="left:66.5px;top:239.9px" width="2.2" height="2.2" viewBox="0 0 2.2 2.2"><path d="M2 0 L2 2 L0 2 Z" fill="#bdbdbd"/></svg>
<svg class="a" style="left:38.0px;top:244.2px" width="12" height="12" viewBox="0 0 12 12"><path d="M1.5 1.5 L1.5 10.5 L10.5 10.5" fill="none" stroke="#c9c9c9" stroke-width="0.7"/><rect x="3" y="6" width="1.6" height="4.5" fill="#c9c9c9"/><rect x="5.6" y="3" width="1.6" height="7.5" fill="#c9c9c9"/><rect x="8.2" y="5" width="1.6" height="5.5" fill="#c9c9c9"/></svg>
<svg class="a" style="left:49.2px;top:254.0px" width="2.2" height="2.2" viewBox="0 0 2.2 2.2"><path d="M2 0 L2 2 L0 2 Z" fill="#bdbdbd"/></svg>
<svg class="a" style="left:55.3px;top:244.2px" width="12" height="12" viewBox="0 0 12 12"><path d="M1 3 L11 3 M3 1 L3 11" stroke="#c9c9c9" stroke-width="0.6"/><path d="M3.5 4 L8 4 L10 6 L10 10.5 L3.5 10.5 Z" fill="none" stroke="#c9c9c9" stroke-width="0.8"/></svg>
<svg class="a" style="left:38.0px;top:257.7px" width="12" height="12" viewBox="0 0 12 12"><path d="M1.5 10.5 L2.5 7.5 L8.5 1.5 L10.5 3.5 L4.5 9.5 Z" fill="none" stroke="#c9c9c9" stroke-width="0.8"/></svg>
<svg class="a" style="left:49.2px;top:267.5px" width="2.2" height="2.2" viewBox="0 0 2.2 2.2"><path d="M2 0 L2 2 L0 2 Z" fill="#bdbdbd"/></svg>
<svg class="a" style="left:55.3px;top:257.7px" width="12" height="12" viewBox="0 0 12 12"><path d="M3 6 L3 3 C3 2.3 4 2.3 4 3 L4 5.5 L4 2 C4 1.3 5 1.3 5 2 L5 5.3 L5 1.6 C5 1 6 1 6 1.6 L6 5.3 L6 2.4 C6 1.8 7 1.8 7 2.4 L7 6.5 L8.2 5.2 C8.7 4.8 9.3 5.3 8.9 5.8 L6.8 9.5 C6 10.5 4 10.8 3.2 9.5 Z" fill="#c9c9c9"/></svg>
<svg class="a" style="left:66.5px;top:267.5px" width="2.2" height="2.2" viewBox="0 0 2.2 2.2"><path d="M2 0 L2 2 L0 2 Z" fill="#bdbdbd"/></svg>
<svg class="a" style="left:38.0px;top:271.6px" width="12" height="12" viewBox="0 0 12 12"><path d="M1.5 2 L1.5 3 M1.5 9 L1.5 10" stroke="#c9c9c9" stroke-width="0.6"/><rect x="3.6" y="2" width="3" height="4.5" fill="#c9c9c9"/><rect x="3.6" y="7" width="6.5" height="3" fill="#c9c9c9"/><path d="M2 2 C1 5 1 7 2 10" fill="none" stroke="#c9c9c9" stroke-width="0.6"/></svg>
<svg class="a" style="left:55.3px;top:271.6px" width="12" height="12" viewBox="0 0 12 12"><circle cx="5" cy="5" r="3.3" fill="none" stroke="#c9c9c9" stroke-width="0.9"/><path d="M7.3 7.3 L10.5 10.5" stroke="#c9c9c9" stroke-width="1.2"/></svg>
<div class="a" style="left:34.0px;top:284.3px;width:37.0px;height:0.6px;background:#4a4a4a"></div>
<div class="a" style="left:36.0px;top:289.4px;width:19.3px;height:19.1px;background:#fff;border:0.8px solid #d6d6d6"></div>
<div class="a" style="left:46.2px;top:299.3px;width:19.7px;height:19.7px;background:#000;border:0.9px solid #bdbdbd"></div>
<div class="a" style="left:50.8px;top:304.0px;width:10.4px;height:10.7px;background:#535353;border:0.9px solid #bdbdbd"></div>
<svg class="a" style="left:60.5px;top:289.8px" width="7" height="7" viewBox="0 0 7 7"><path d="M1.5 2 L4.5 2 C5.5 2 5.8 3 5.8 4 L5.8 6" fill="none" stroke="#c9c9c9" stroke-width="0.8"/><path d="M0.5 2 L2 0.8 L2 3.2 Z M4.6 5 L7 5 L5.8 6.6 Z" fill="#c9c9c9"/></svg>
<svg class="a" style="left:36.0px;top:312.0px" width="7" height="7" viewBox="0 0 7 7"><rect x="2.5" y="2.5" width="4" height="4" fill="#222" stroke="#d0d0d0" stroke-width="0.6"/><rect x="0.5" y="0.5" width="4" height="4" fill="#eee" stroke="#555" stroke-width="0.5"/></svg>
<div class="a" style="left:36.6px;top:324.6px;width:8.7px;height:8.7px;background:#3a3a3a;border-radius:1px"></div>
<div class="a" style="left:38.8px;top:326.8px;width:4.4px;height:4.4px;background:#111;border:0.6px solid #777"></div>
<div class="a" style="left:48.5px;top:325.2px;width:7.2px;height:7.4px;background:linear-gradient(90deg,#f0f0f0,#555);border:0.5px solid #777"></div>
<svg class="a" style="left:60.1px;top:325.2px" width="7.4" height="7.4" viewBox="0 0 7.4 7.4"><rect x="0.3" y="0.3" width="6.8" height="6.8" fill="#fff" stroke="#888" stroke-width="0.5"/><path d="M0.5 7 L7 0.5" stroke="#e3262e" stroke-width="1.3"/></svg>
<div class="a" style="left:36.5px;top:337.8px;width:10.0px;height:10.0px;background:#3c3c3c;border-radius:1px"></div>
<svg class="a" style="left:37.5px;top:338.8px" width="8" height="8" viewBox="0 0 8 8"><circle cx="3.2" cy="3.2" r="2.4" fill="#c9c9c9"/><circle cx="4.8" cy="4.8" r="2.4" fill="#c9c9c9" stroke="#3c3c3c" stroke-width="0.5"/></svg>
<svg class="a" style="left:49.5px;top:338.8px" width="8" height="8" viewBox="0 0 8 8"><circle cx="3.2" cy="3.2" r="2.4" fill="none" stroke="#c9c9c9" stroke-width="0.7"/><circle cx="4.8" cy="4.8" r="2.4" fill="#c9c9c9" stroke="#535353" stroke-width="0.5"/></svg>
<div class="a" style="left:58.5px;top:337.8px;width:10.0px;height:10.0px;background:#4e4e4e"></div>
<svg class="a" style="left:59.5px;top:338.8px" width="8" height="8" viewBox="0 0 8 8"><circle cx="4" cy="4" r="2.2" fill="none" stroke="#777" stroke-width="0.6"/></svg>
<svg class="a" style="left:45.5px;top:352.0px" width="14" height="10" viewBox="0 0 14 10"><rect x="0.5" y="3.5" width="7.5" height="5.8" fill="#535353" stroke="#bdbdbd" stroke-width="0.8"/><rect x="5" y="0.5" width="8" height="6" fill="#535353" stroke="#bdbdbd" stroke-width="0.8"/><path d="M5 1.8 L13 1.8 M0.5 4.8 L5 4.8" stroke="#bdbdbd" stroke-width="0.6"/></svg>
<svg class="a" style="left:48.0px;top:374.2px" width="9" height="3" viewBox="0 0 9 3"><circle cx="1.5" cy="1.3" r="0.85" fill="#cfcfcf"/><circle cx="4.5" cy="1.3" r="0.85" fill="#cfcfcf"/><circle cx="7.5" cy="1.3" r="0.85" fill="#cfcfcf"/></svg>
<div class="a" style="left:36.0px;top:383.7px;width:33.2px;height:16.0px;background:#1473e6;border-radius:1.2px"></div>
<svg class="a" style="left:46.0px;top:385.5px" width="14" height="13" viewBox="0 0 14 13"><path d="M8 1 L8.8 4.2 L12 5 L8.8 5.8 L8 9 L7.2 5.8 L4 5 L7.2 4.2 Z" fill="#fff"/><path d="M4 7.5 L4.5 9.5 L6.5 10 L4.5 10.5 L4 12.5 L3.5 10.5 L1.5 10 L3.5 9.5 Z" fill="#fff"/></svg>
<div class="a" style="left:839.0px;top:334.8px;width:7.2px;height:14.2px;background:#5a5a5a;border-radius:3.5px"></div>
<svg class="a" style="left:839.5px;top:79.5px" width="7" height="5" viewBox="0 0 7 5"><path d="M1 3.8 L3.5 1.3 L6 3.8" fill="none" stroke="#9a9a9a" stroke-width="0.7"/></svg>
<svg class="a" style="left:839.5px;top:590.5px" width="7" height="5" viewBox="0 0 7 5"><path d="M1 1.2 L3.5 3.7 L6 1.2" fill="none" stroke="#9a9a9a" stroke-width="0.7"/></svg>
<div class="a" style="left:846.9px;top:60.0px;width:145.1px;height:547.0px;background:#3f3f3f"></div>
<div class="a" style="left:849.0px;top:60.0px;width:143.0px;height:7.3px;background:#424242"></div>
<svg class="a" style="left:982.5px;top:62.0px" width="6" height="4" viewBox="0 0 6 4"><path d="M1 0.5 L2.8 2 L1 3.5 M3.4 0.5 L5.2 2 L3.4 3.5" fill="none" stroke="#9a9a9a" stroke-width="0.6"/></svg>
<div class="a" style="left:849.0px;top:67.3px;width:143.0px;height:16.1px;background:#434343"></div>
<div class="a" style="left:849.0px;top:68.0px;width:40.5px;height:15.4px;background:#535353"></div>
<div class="t" style="left:854.0px;top:72.71px;font-size:6.30px;color:#e8e8e8;font-weight:bold;transform:scaleX(0.979);transform-origin:0 0;">Properties</div>
<div class="a" style="left:849.0px;top:83.4px;width:143.0px;height:257.6px;background:#535353"></div>
<div class="a" style="left:984.8px;top:86.0px;width:6.5px;height:246.6px;background:#4e4e4e"></div>
<div class="a" style="left:985.3px;top:92.0px;width:4.8px;height:198.0px;background:#5c5c5c;border-radius:2.4px"></div>
<svg class="a" style="left:984.5px;top:85.0px" width="7" height="4" viewBox="0 0 7 4"><path d="M1 3.2 L3.5 1 L6 3.2" fill="none" stroke="#9a9a9a" stroke-width="0.6"/></svg>
<div class="t" style="left:854.0px;top:90.51px;font-size:6.30px;color:#d9d9d9;transform:scaleX(0.943);transform-origin:0 0;">No Selection</div>
<div class="a" style="left:849.0px;top:102.3px;width:136.5px;height:0.7px;background:#4a4a4a"></div>
<div class="t" style="left:854.0px;top:110.01px;font-size:6.30px;color:#d9d9d9;transform:scaleX(0.979);transform-origin:0 0;">Document</div>
<div class="t" style="left:877.9px;top:125.81px;font-size:6.30px;color:#d9d9d9;transform:scaleX(0.963);transform-origin:0 0;">Units:</div>
<div class="a" style="left:898.0px;top:123.2px;width:64.0px;height:10.1px;background:#454545;border-radius:1px"></div>
<div class="t" style="left:901.5px;top:125.81px;font-size:6.30px;color:#e6e6e6;">Millimeters</div>
<svg class="a" style="left:954.4px;top:126.3px" width="6.2" height="4" viewBox="0 0 6.2 4"><path d="M1 1.2 L3.10 2.46 L5.20 1.2" fill="none" stroke="#c8c8c8" stroke-width="0.9"/></svg>
<div class="t" style="left:866.9px;top:142.71px;font-size:6.30px;color:#d9d9d9;transform:scaleX(1.023);transform-origin:0 0;">Artboard:</div>
<div class="a" style="left:898.0px;top:139.8px;width:31.0px;height:10.5px;background:#454545;border-radius:1px"></div>
<div class="t" style="left:899.8px;top:142.51px;font-size:6.30px;color:#e6e6e6;transform:scaleX(0.913);transform-origin:0 0;">4</div>
<div class="a" style="left:930.0px;top:139.8px;width:9.2px;height:10.5px;background:#4a4a4a;border-radius:1px"></div>
<svg class="a" style="left:931.5px;top:143.2px" width="6.2" height="4" viewBox="0 0 6.2 4"><path d="M1 1.2 L3.10 2.46 L5.20 1.2" fill="none" stroke="#c8c8c8" stroke-width="0.9"/></svg>
<svg class="a" style="left:946.5px;top:142.5px" width="4" height="5" viewBox="0 0 4 5"><path d="M3.5 0.5 L0.8 2.5 L3.5 4.5 Z" fill="#c9c9c9"/></svg>
<svg class="a" style="left:958.5px;top:142.5px" width="4" height="5" viewBox="0 0 4 5"><path d="M0.5 0.5 L3.2 2.5 L0.5 4.5 Z" fill="#c9c9c9"/></svg>
<div class="a" style="left:897.3px;top:155.4px;width:65.5px;height:11.8px;border:0.8px solid #3f3f3f;border-radius:2px;background:#535353"></div>
<div class="t" style="left:910.0px;top:158.81px;font-size:6.30px;color:#e0e0e0;transform:scaleX(0.986);transform-origin:0 0;">Edit Artboards</div>
<div class="a" style="left:849.0px;top:175.3px;width:136.5px;height:0.7px;background:#4a4a4a"></div>
<div class="t" style="left:854.0px;top:184.01px;font-size:6.30px;color:#d9d9d9;transform:scaleX(0.952);transform-origin:0 0;">Ruler &amp; Grids</div>
<div class="a" style="left:903.9px;top:180.6px;width:11.9px;height:11.8px;background:#383838;border-radius:1px"></div>
<svg class="a" style="left:905.0px;top:181.7px" width="10" height="10" viewBox="0 0 10 10"><path d="M1.5 8.5 L1.5 1.5 L8.5 1.5" fill="none" stroke="#e6e6e6" stroke-width="2"/></svg>
<svg class="a" style="left:921.5px;top:181.2px" width="11" height="11" viewBox="0 0 11 11"><rect x="0.8" y="0.8" width="9.4" height="9.4" fill="none" stroke="#c0c0c0" stroke-width="0.7"/><path d="M4 0.8 L4 10.2 M7 0.8 L7 10.2 M0.8 4 L10.2 4 M0.8 7 L10.2 7" stroke="#c0c0c0" stroke-width="0.6"/></svg>
<svg class="a" style="left:938.5px;top:181.2px" width="11" height="11" viewBox="0 0 11 11"><rect x="0.8" y="0.8" width="9.4" height="9.4" fill="none" stroke="#b5b5b5" stroke-width="0.7" stroke-dasharray="1 0.6"/><path d="M0.8 4 L10.2 4 M0.8 7 L10.2 7 M4 0.8 L4 10.2 M7 0.8 L7 10.2" stroke="#9a9a9a" stroke-width="0.5" stroke-dasharray="0.8 0.8"/></svg>
<div class="a" style="left:849.0px;top:197.9px;width:136.5px;height:0.7px;background:#4a4a4a"></div>
<div class="t" style="left:854.0px;top:206.01px;font-size:6.30px;color:#d9d9d9;transform:scaleX(0.962);transform-origin:0 0;">Guides</div>
<svg class="a" style="left:904.5px;top:202.5px" width="10" height="11" viewBox="0 0 10 11"><path d="M4 0.5 L4 10.5" stroke="#8f8f8f" stroke-width="1.3"/><path d="M1 3.5 L9 3.5 M1 7 L9 7" stroke="#8f8f8f" stroke-width="1.4"/></svg>
<svg class="a" style="left:922.0px;top:202.5px" width="10" height="11" viewBox="0 0 10 11"><path d="M4 0.5 L4 10.5" stroke="#6a6a6a" stroke-width="1.2"/><path d="M1 4 L7 4 M1 7 L9 7" stroke="#6a6a6a" stroke-width="1.2"/></svg>
<div class="a" style="left:938.0px;top:202.2px;width:12.0px;height:12.0px;background:#383838;border-radius:1px"></div>
<svg class="a" style="left:939.0px;top:203.2px" width="10" height="10" viewBox="0 0 10 10"><path d="M3 0.8 L3 9.5" stroke="#e6e6e6" stroke-width="1.1"/><path d="M0.5 2.5 L9 2.5" stroke="#e6e6e6" stroke-width="0.8"/><path d="M6.5 5 L5.5 7 L7 7 L6 9.5" fill="none" stroke="#e6e6e6" stroke-width="0.9"/></svg>
<div class="a" style="left:849.0px;top:219.5px;width:136.5px;height:0.7px;background:#4a4a4a"></div>
<div class="t" style="left:854.0px;top:227.31px;font-size:6.30px;color:#d9d9d9;transform:scaleX(0.943);transform-origin:0 0;">Snap Options</div>
<div class="a" style="left:903.9px;top:224.0px;width:12.0px;height:12.0px;background:#383838;border-radius:1px"></div>
<svg class="a" style="left:905.0px;top:225.0px" width="10" height="10" viewBox="0 0 10 10"><path d="M2.5 1 L2.5 9" stroke="#e6e6e6" stroke-width="1"/><path d="M4.5 3 L7 3 A2 2 0 0 1 7 7 L4.5 7" fill="none" stroke="#e6e6e6" stroke-width="1.1"/><path d="M1.5 5 L4 5" stroke="#e6e6e6" stroke-width="0.8"/></svg>
<svg class="a" style="left:921.5px;top:224.5px" width="11" height="11" viewBox="0 0 11 11"><rect x="1" y="0.8" width="2.6" height="9.4" fill="none" stroke="#b0b0b0" stroke-width="0.7" stroke-dasharray="1 0.5"/><path d="M5 3 L7.5 3 A2 2 0 0 1 7.5 7 L5 7" fill="none" stroke="#c0c0c0" stroke-width="1.1"/></svg>
<svg class="a" style="left:938.5px;top:224.5px" width="11" height="11" viewBox="0 0 11 11"><g fill="#c0c0c0"><rect x="0.8" y="1" width="1.8" height="1.8"/><rect x="0.8" y="4.2" width="1.8" height="1.8"/><rect x="0.8" y="7.4" width="1.8" height="1.8"/></g><path d="M4.5 3 L7.5 3 A2 2 0 0 1 7.5 7 L4.5 7" fill="none" stroke="#c0c0c0" stroke-width="1.1"/></svg>
<div class="a" style="left:881.4px;top:242.4px;width:103.3px;height:11.0px;border:0.8px solid #3f3f3f;border-radius:2px;background:#535353"></div>
<div class="t" style="left:894.5px;top:245.41px;font-size:6.30px;color:#e0e0e0;transform:scaleX(0.981);transform-origin:0 0;">Smart Guides Preferences...</div>
<div class="a" style="left:849.0px;top:256.3px;width:136.5px;height:0.7px;background:#4a4a4a"></div>
<div class="t" style="left:854.0px;top:264.11px;font-size:6.30px;color:#d9d9d9;transform:scaleX(0.957);transform-origin:0 0;">Preferences</div>
<div class="t" style="left:854.0px;top:279.11px;font-size:6.30px;color:#d9d9d9;transform:scaleX(0.985);transform-origin:0 0;">Keyboard Increment:</div>
<div class="a" style="left:915.8px;top:276.5px;width:32.0px;height:9.3px;background:#454545;border-radius:1px"></div>
<div class="t" style="left:918.0px;top:278.71px;font-size:6.30px;color:#e6e6e6;transform:scaleX(0.982);transform-origin:0 0;">0,353 mm</div>
<div class="a" style="left:856.0px;top:294.3px;width:6.8px;height:6.8px;border:0.8px solid #a8a8a8;border-radius:1px"></div>
<div class="t" style="left:864.8px;top:295.21px;font-size:6.30px;color:#d9d9d9;transform:scaleX(0.881);transform-origin:0 0;">Use Preview Bounds</div>
<div class="a" style="left:856.0px;top:308.2px;width:6.8px;height:6.8px;border:0.8px solid #a8a8a8;border-radius:1px"></div>
<div class="t" style="left:864.8px;top:309.11px;font-size:6.30px;color:#d9d9d9;transform:scaleX(0.852);transform-origin:0 0;">Scale Corners</div>
<div class="a" style="left:856.0px;top:321.7px;width:6.8px;height:6.8px;border:0.8px solid #a8a8a8;border-radius:1px"></div>
<div class="t" style="left:864.8px;top:322.61px;font-size:6.30px;color:#d9d9d9;transform:scaleX(0.944);transform-origin:0 0;">Scale Strokes &amp; Effects</div>
<div class="a" style="left:849.0px;top:337.2px;width:136.5px;height:0.6px;background:#4b4b4b"></div>
<div class="a" style="left:849.0px;top:341.9px;width:143.0px;height:16.4px;background:#434343"></div>
<div class="a" style="left:849.0px;top:343.1px;width:29.7px;height:15.2px;background:#535353"></div>
<div class="t" style="left:853.5px;top:348.21px;font-size:6.30px;color:#e8e8e8;font-weight:bold;transform:scaleX(0.950);transform-origin:0 0;">Layers</div>
<svg class="a" style="left:981.5px;top:348.0px" width="7" height="6" viewBox="0 0 7 6"><path d="M0.5 0.8 L6.5 0.8 M0.5 2.8 L6.5 2.8 M0.5 4.8 L6.5 4.8" stroke="#9a9a9a" stroke-width="0.8"/></svg>
<div class="a" style="left:849.0px;top:358.3px;width:143.0px;height:230.4px;background:#535353"></div>
<div class="a" style="left:852.0px;top:361.4px;width:136.5px;height:216.4px;border:0.5px solid #4f4f4f;background:#535353"></div>
<div class="a" style="left:856.1px;top:365.3px;width:114.8px;height:11.3px;background:#454545;border-radius:1px"></div>
<svg class="a" style="left:858.5px;top:367.3px" width="8" height="8" viewBox="0 0 8 8"><circle cx="3.3" cy="3.3" r="2.2" fill="none" stroke="#bdbdbd" stroke-width="0.7"/><path d="M4.9 4.9 L7 7" stroke="#bdbdbd" stroke-width="0.9"/></svg>
<div class="t" style="left:871.3px;top:368.31px;font-size:6.30px;color:#c2c2c2;font-style:italic;transform:scaleX(0.948);transform-origin:0 0;">Search All</div>
<svg class="a" style="left:977.8px;top:366.0px" width="8" height="9" viewBox="0 0 8 9"><path d="M0.3 0.5 L7.6 0.5 L4.6 4 L4.6 8.5 L3.3 7.7 L3.3 4 Z" fill="#d0d0d0"/></svg>
<div class="a" style="left:851.9px;top:383.3px;width:136.2px;height:10.9px;background:#4b6580"></div>
<div class="a" style="left:863.6px;top:383.3px;width:0.6px;height:22.5px;background:#454545"></div>
<div class="a" style="left:967.5px;top:383.3px;width:0.6px;height:22.5px;background:#454545"></div>
<div class="a" style="left:851.9px;top:405.6px;width:136.2px;height:0.6px;background:#4b4b4b"></div>
<div class="a" style="left:851.9px;top:394.2px;width:136.2px;height:0.6px;background:#4a4a4a"></div>
<svg class="a" style="left:854.3px;top:386.5px" width="6" height="4.4" viewBox="0 0 6 4.4"><path d="M0.3 2.2 C1.8 -0.3 4.2 -0.3 5.7 2.2 C4.2 4.7 1.8 4.7 0.3 2.2 Z" fill="none" stroke="#d0d0d0" stroke-width="0.6"/><circle cx="3" cy="2.2" r="1" fill="#d0d0d0"/></svg>
<svg class="a" style="left:971.0px;top:386.0px" width="5.4" height="5.4" viewBox="0 0 5.4 5.4"><circle cx="2.7" cy="2.7" r="2.2" fill="none" stroke="#cfcfcf" stroke-width="0.7"/></svg>
<svg class="a" style="left:854.3px;top:397.7px" width="6" height="4.4" viewBox="0 0 6 4.4"><path d="M0.3 2.2 C1.8 -0.3 4.2 -0.3 5.7 2.2 C4.2 4.7 1.8 4.7 0.3 2.2 Z" fill="none" stroke="#d0d0d0" stroke-width="0.6"/><circle cx="3" cy="2.2" r="1" fill="#d0d0d0"/></svg>
<svg class="a" style="left:971.0px;top:397.2px" width="5.4" height="5.4" viewBox="0 0 5.4 5.4"><circle cx="2.7" cy="2.7" r="2.2" fill="none" stroke="#cfcfcf" stroke-width="0.7"/></svg>
<div class="a" style="left:876.4px;top:384.3px;width:1.6px;height:9.0px;background:#f0424f"></div>
<div class="a" style="left:876.4px;top:395.6px;width:1.6px;height:9.0px;background:#4f7ff0"></div>
<div class="a" style="left:893.4px;top:384.4px;width:10.2px;height:9.2px;background:#fff;border:0.7px solid #2e2e2e"></div>
<div class="a" style="left:893.4px;top:395.6px;width:10.2px;height:9.2px;background:#fff;border:0.7px solid #2e2e2e"></div>
<svg class="a" style="left:894.5px;top:396.8px" width="8" height="7" viewBox="0 0 8 7"><rect x="0.3" y="0.5" width="3" height="2" fill="none" stroke="#e77" stroke-width="0.4"/><rect x="4" y="0.5" width="3.5" height="2" fill="none" stroke="#999" stroke-width="0.4"/><rect x="2" y="3.5" width="2" height="2.5" fill="none" stroke="#888" stroke-width="0.4"/></svg>
<svg class="a" style="left:882.5px;top:397.8px" width="4" height="5" viewBox="0 0 4 5"><path d="M1 0.5 L2.8 2.2 L1 3.9" fill="none" stroke="#c8c8c8" stroke-width="0.7"/></svg>
<div class="t" style="left:906.1px;top:386.51px;font-size:6.30px;color:#e6e6e6;transform:scaleX(0.981);transform-origin:0 0;">Dimensions</div>
<div class="t" style="left:906.1px;top:397.71px;font-size:6.30px;color:#e0e0e0;transform:scaleX(0.976);transform-origin:0 0;">Layer 1</div>
<svg class="a" style="left:985.2px;top:383.3px" width="3" height="3" viewBox="0 0 3 3"><path d="M0 0 L3 0 L3 3 Z" fill="#e8e8e8"/></svg>
<div class="t" style="left:851.4px;top:581.51px;font-size:6.30px;color:#d9d9d9;transform:scaleX(0.931);transform-origin:0 0;">2 Layers</div>
<svg class="a" style="left:880.3px;top:579.5px" width="9" height="9" viewBox="0 0 9 9"><rect x="0.8" y="0.8" width="6" height="6" fill="none" stroke="#c8c8c8" stroke-width="0.7" stroke-dasharray="1.2 0.6"/><rect x="5" y="5" width="3.5" height="3.5" fill="#c8c8c8"/></svg>
<svg class="a" style="left:894.0px;top:579.5px" width="9" height="9" viewBox="0 0 9 9"><path d="M5 0.8 L8.2 0.8 L8.2 4 M8.2 0.8 L4.5 4.5 M3.5 2 L0.8 2 L0.8 8.2 L7 8.2 L7 5.5" fill="none" stroke="#707070" stroke-width="0.7"/></svg>
<svg class="a" style="left:908.5px;top:579.5px" width="9" height="9" viewBox="0 0 9 9"><circle cx="3.5" cy="3.5" r="2.6" fill="none" stroke="#707070" stroke-width="0.7"/><path d="M5.5 5.5 L8.2 8.2" stroke="#707070" stroke-width="0.9"/></svg>
<svg class="a" style="left:922.5px;top:579.5px" width="9" height="9" viewBox="0 0 9 9"><rect x="2" y="2" width="5" height="5" fill="#5e5e5e" stroke="#6a6a6a" stroke-width="0.6"/></svg>
<svg class="a" style="left:937.5px;top:579.5px" width="10" height="9" viewBox="0 0 10 9"><path d="M0.8 1.5 L0.8 4 L4 4" fill="none" stroke="#c8c8c8" stroke-width="0.8"/><path d="M3 2.5 L4.5 4 L3 5.5" fill="none" stroke="#c8c8c8" stroke-width="0.7"/><rect x="5" y="0.8" width="4" height="7" fill="none" stroke="#c8c8c8" stroke-width="0.7"/></svg>
<svg class="a" style="left:953.5px;top:579.5px" width="9" height="9" viewBox="0 0 9 9"><rect x="0.8" y="0.8" width="7.4" height="7.4" fill="none" stroke="#c8c8c8" stroke-width="0.7"/><path d="M4.5 2.5 L4.5 6.5 M2.5 4.5 L6.5 4.5" stroke="#c8c8c8" stroke-width="0.8"/></svg>
<svg class="a" style="left:968.0px;top:579.5px" width="8" height="9" viewBox="0 0 8 9"><path d="M0.5 1.8 L7.5 1.8 M3 1.8 L3 0.6 L5 0.6 L5 1.8" fill="none" stroke="#c8c8c8" stroke-width="0.6"/><path d="M1.2 2.5 L6.8 2.5 L6.3 8.4 L1.7 8.4 Z" fill="#c8c8c8"/></svg>
<div class="a" style="left:849.0px;top:588.7px;width:143.0px;height:1.3px;background:#414141"></div>
<div class="a" style="left:849.0px;top:590.0px;width:143.0px;height:17.0px;background:#434343"></div>
<div class="a" style="left:849.0px;top:591.0px;width:46.7px;height:16.0px;background:#535353"></div>
<div class="t" style="left:853.8px;top:596.01px;font-size:6.30px;color:#e8e8e8;font-weight:bold;transform:scaleX(0.952);transform-origin:0 0;">Asset Export</div>
<svg class="a" style="left:981.5px;top:596.0px" width="7" height="6" viewBox="0 0 7 6"><path d="M0.5 0.8 L6.5 0.8 M0.5 2.8 L6.5 2.8 M0.5 4.8 L6.5 4.8" stroke="#9a9a9a" stroke-width="0.8"/></svg>
<div class="a" style="left:73.0px;top:583.5px;width:765.0px;height:14.0px;background:#535353;border-top:0.6px solid #4a4a4a"></div>
<div class="a" style="left:73.0px;top:597.5px;width:765.0px;height:9.5px;background:#535353"></div>
<svg class="a" style="left:76.8px;top:586.5px" width="8.2" height="8.2" viewBox="0 0 8.2 8.2"><circle cx="4.1" cy="4.1" r="4" fill="#d8d8d8"/><path d="M2.8 3.2 C2.8 1.6 5.4 1.6 5.4 3.1 C5.4 4.1 4.1 4.2 4.1 5.3" fill="none" stroke="#4e4e4e" stroke-width="0.9"/><circle cx="4.1" cy="6.4" r="0.55" fill="#4e4e4e"/></svg>
<div class="t" style="left:91.4px;top:588.51px;font-size:6.30px;color:#d6d6d6;">Select the &#x27;Question mark&#x27; icon to learn how to use the tool.</div>
<div class="a" style="left:77.0px;top:598.5px;width:28.0px;height:8.5px;background:#444"></div>
<div class="t" style="left:78.2px;top:601.01px;font-size:6.30px;color:#e0e0e0;transform:scaleX(0.819);transform-origin:0 0;">20,34%</div>
<div class="a" style="left:106.0px;top:598.5px;width:11.0px;height:8.5px;background:#4a4a4a"></div>
<svg class="a" style="left:108.4px;top:601.0px" width="6.2" height="4" viewBox="0 0 6.2 4"><path d="M1 1.2 L3.10 2.46 L5.20 1.2" fill="none" stroke="#c8c8c8" stroke-width="0.9"/></svg>
<div class="a" style="left:118.3px;top:598.5px;width:29.0px;height:8.5px;background:#444"></div>
<div class="t" style="left:119.5px;top:601.01px;font-size:6.30px;color:#e0e0e0;transform:scaleX(0.913);transform-origin:0 0;">0°</div>
<div class="a" style="left:148.0px;top:598.5px;width:10.0px;height:8.5px;background:#4a4a4a"></div>
<svg class="a" style="left:149.9px;top:601.0px" width="6.2" height="4" viewBox="0 0 6.2 4"><path d="M1 1.2 L3.10 2.46 L5.20 1.2" fill="none" stroke="#c8c8c8" stroke-width="0.9"/></svg>
<svg class="a" style="left:162.5px;top:600.5px" width="6" height="5" viewBox="0 0 6 5"><path d="M0.8 0.3 L0.8 4.5" stroke="#c8c8c8" stroke-width="0.8"/><path d="M5 0.3 L1.8 2.4 L5 4.5 Z" fill="#c8c8c8"/></svg>
<svg class="a" style="left:172.0px;top:600.5px" width="5" height="5" viewBox="0 0 5 5"><path d="M4 0.3 L0.8 2.4 L4 4.5 Z" fill="#c8c8c8"/></svg>
<div class="a" style="left:181.0px;top:598.5px;width:22.6px;height:8.5px;background:#444"></div>
<div class="t" style="left:182.5px;top:601.01px;font-size:6.30px;color:#e0e0e0;transform:scaleX(0.913);transform-origin:0 0;">4</div>
<div class="a" style="left:205.0px;top:598.5px;width:9.0px;height:8.5px;background:#4a4a4a"></div>
<svg class="a" style="left:206.4px;top:601.0px" width="6.2" height="4" viewBox="0 0 6.2 4"><path d="M1 1.2 L3.10 2.46 L5.20 1.2" fill="none" stroke="#c8c8c8" stroke-width="0.9"/></svg>
<svg class="a" style="left:219.5px;top:600.5px" width="5" height="5" viewBox="0 0 5 5"><path d="M1 0.3 L4.2 2.4 L1 4.5 Z" fill="#c8c8c8"/></svg>
<svg class="a" style="left:228.5px;top:600.5px" width="6" height="5" viewBox="0 0 6 5"><path d="M5.2 0.3 L5.2 4.5" stroke="#c8c8c8" stroke-width="0.8"/><path d="M0.8 0.3 L4 2.4 L0.8 4.5 Z" fill="#c8c8c8"/></svg>
<div class="a" style="left:238.0px;top:598.5px;width:0.6px;height:8.5px;background:#444"></div>
<div class="t" style="left:263.4px;top:600.91px;font-size:6.30px;color:#d6d6d6;transform:scaleX(0.987);transform-origin:0 0;">Toggle Direct Selection</div>
<svg class="a" style="left:356.0px;top:600.8px" width="5" height="5" viewBox="0 0 5 5"><path d="M1 0.3 L4.2 2.4 L1 4.5 Z" fill="#d0d0d0"/></svg>
<div class="a" style="left:363.0px;top:597.5px;width:475.0px;height:9.5px;background:#494949"></div>
<svg class="a" style="left:366.5px;top:600.5px" width="4" height="5" viewBox="0 0 4 5"><path d="M3 0.5 L1 2.5 L3 4.5" fill="none" stroke="#9a9a9a" stroke-width="0.6"/></svg>
<svg class="a" style="left:831.0px;top:600.5px" width="4" height="5" viewBox="0 0 4 5"><path d="M1 0.5 L3 2.5 L1 4.5" fill="none" stroke="#9a9a9a" stroke-width="0.6"/></svg>
<div class="a" style="left:632.0px;top:600.3px;width:14.0px;height:6.7px;background:#5c5c5c;border-radius:3.3px"></div>
<div class="a" style="left:838.0px;top:597.5px;width:9.5px;height:9.5px;background:#535353"></div>
</body></html>
